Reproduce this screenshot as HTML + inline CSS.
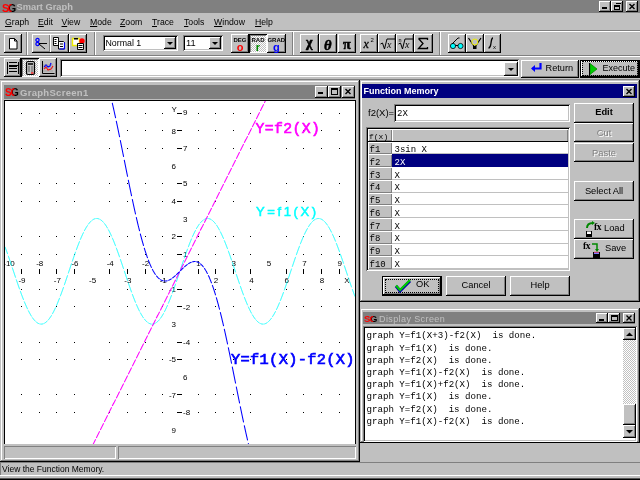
<!DOCTYPE html>
<html><head><meta charset="utf-8"><style>
html,body{margin:0;padding:0;}
body{width:640px;height:480px;position:relative;overflow:hidden;background:#c0c0c0;font-family:"Liberation Sans",sans-serif;}
div{position:absolute;box-sizing:border-box;}
.t{white-space:pre;line-height:1;}
.mn{font:9px "Liberation Sans",sans-serif;color:#000;}
.mono{font:9px "Liberation Mono",monospace;color:#000;}
.rb{background:#c0c0c0;box-shadow:inset -1px -1px #000,inset 1px 1px #fff,inset -2px -2px #808080;}
.rbd{background:#c0c0c0;box-shadow:inset -1px -1px #000,inset 1px 1px #000,inset -2px -2px #000, inset 2px 2px #fff,inset -3px -3px #808080;}
.pb{background-color:#fff;background-image:linear-gradient(45deg,#c0c0c0 25%,transparent 25%,transparent 75%,#c0c0c0 75%),linear-gradient(45deg,#c0c0c0 25%,transparent 25%,transparent 75%,#c0c0c0 75%);background-size:2px 2px;background-position:0 0,1px 1px;box-shadow:inset 1px 1px #000,inset -1px -1px #fff,inset 2px 2px #808080;}
.sk{box-shadow:inset 1px 1px #808080,inset -1px -1px #fff,inset 2px 2px #000,inset -2px -2px #c0c0c0;}
.sk2{box-shadow:inset 1px 1px #808080,inset -1px -1px #fff;}
.win{background:#c0c0c0;box-shadow:inset -1px -1px #000,inset 1px 1px #c0c0c0,inset -2px -2px #808080,inset 2px 2px #fff;}
svg{overflow:visible}
</style></head><body>
<div id="root" style="left:0;top:0;width:640px;height:480px;background:#c0c0c0;will-change:transform;overflow:hidden">
<div class="" style="left:0px;top:0px;width:640px;height:13px;background:#808080"></div>
<div class="t " style="left:2px;top:1.5px;font:bold 10.5px 'Liberation Sans';color:#f00">S</div>
<div class="t " style="left:8px;top:1.5px;font:bold 10.5px 'Liberation Sans';color:#000">G</div>
<div class="t " style="left:7.5px;top:1.5px;font:bold 10.5px 'Liberation Sans';color:#f00;clip-path:inset(0 50% 0 0)">G</div>
<div class="t " style="left:16.5px;top:1.5px;font:bold 9.3px 'Liberation Sans';color:#c0c0c0">Smart Graph</div>
<div class="rb" style="left:599px;top:1px;width:12px;height:11px;"></div>
<div class="rb" style="left:611px;top:1px;width:12px;height:11px;"></div>
<div class="rb" style="left:626px;top:1px;width:12px;height:11px;"></div>
<div class="" style="left:602px;top:7px;width:5px;height:2px;background:#000"></div>
<div class="" style="left:614px;top:5px;width:6px;height:5px;border:1px solid #000;border-top-width:2px"></div>
<div class="" style="left:616px;top:3px;width:5px;height:1px;background:#000"></div>
<svg style="position:absolute;left:626px;top:1px" width="12" height="11" viewBox="0 0 12 11"><path d="M3.5 3L8.5 8M8.5 3L3.5 8" stroke="#000" stroke-width="1.4"/></svg>
<div class="t mn" style="left:5px;top:16.8px;font-size:8.7px"><u>G</u>raph</div>
<div class="t mn" style="left:38px;top:16.8px;font-size:8.7px"><u>E</u>dit</div>
<div class="t mn" style="left:61.5px;top:16.8px;font-size:8.7px"><u>V</u>iew</div>
<div class="t mn" style="left:90px;top:16.8px;font-size:8.7px"><u>M</u>ode</div>
<div class="t mn" style="left:120px;top:16.8px;font-size:8.7px"><u>Z</u>oom</div>
<div class="t mn" style="left:152px;top:16.8px;font-size:8.7px"><u>T</u>race</div>
<div class="t mn" style="left:184px;top:16.8px;font-size:8.7px"><u>T</u>ools</div>
<div class="t mn" style="left:214px;top:16.8px;font-size:8.7px"><u>W</u>indow</div>
<div class="t mn" style="left:255px;top:16.8px;font-size:8.7px"><u>H</u>elp</div>
<div class="" style="left:0px;top:30px;width:640px;height:1px;background:#808080"></div>
<div class="" style="left:0px;top:31px;width:640px;height:1px;background:#fff"></div>
<div class="" style="left:26px;top:32px;width:1px;height:23px;background:#808080"></div>
<div class="" style="left:27px;top:32px;width:1px;height:23px;background:#fff"></div>
<div class="" style="left:94px;top:32px;width:1px;height:23px;background:#808080"></div>
<div class="" style="left:95px;top:32px;width:1px;height:23px;background:#fff"></div>
<div class="" style="left:292px;top:32px;width:1px;height:23px;background:#808080"></div>
<div class="" style="left:293px;top:32px;width:1px;height:23px;background:#fff"></div>
<div class="" style="left:439px;top:32px;width:1px;height:23px;background:#808080"></div>
<div class="" style="left:440px;top:32px;width:1px;height:23px;background:#fff"></div>
<div class="" style="left:0px;top:55px;width:640px;height:1px;background:#808080"></div>
<div class="" style="left:0px;top:56px;width:640px;height:1px;background:#fff"></div>
<div class="rb" style="left:4px;top:34px;width:18px;height:19px;"></div>
<svg style="position:absolute;left:4px;top:34px" width="18" height="19" viewBox="0 0 18 19"><path d="M5.5 4.5h5l2.5 2.5v8h-7.5z" fill="#fff" stroke="#000"/><path d="M10.5 4.5v2.5h2.5" fill="none" stroke="#000"/></svg>
<div class="rb" style="left:32px;top:34px;width:18.6px;height:19px;"></div>
<svg style="position:absolute;left:32px;top:34px" width="18.6" height="19" viewBox="0 0 18.6 19"><circle cx="5.5" cy="6" r="1.6" fill="none" stroke="#00f" stroke-width="1.3"/><circle cx="5.5" cy="10" r="1.6" fill="none" stroke="#00f" stroke-width="1.3"/><path d="M7 9.5h8M7 10l6 5" stroke="#000" stroke-width="1"/></svg>
<div class="rb" style="left:50.4px;top:34px;width:18.6px;height:19px;"></div>
<svg style="position:absolute;left:50.4px;top:34px" width="18.6" height="19" viewBox="0 0 18.6 19"><path d="M3.5 3.5h5v8h-5z" fill="#fff" stroke="#000"/><path d="M4.5 5.5h2M4.5 7.5h2M4.5 9.5h2" stroke="#000"/><path d="M8.5 7.5h5l1 1v6.5h-6z" fill="#fff" stroke="#000"/><path d="M14.5 8.5v6.5M9.5 15h5" stroke="#00f" stroke-width="1.2"/><path d="M10 10h3M10 12.5h3" stroke="#000"/></svg>
<div class="rb" style="left:68.8px;top:34px;width:18.6px;height:19px;"></div>
<svg style="position:absolute;left:68.8px;top:34px" width="18.6" height="19" viewBox="0 0 18.6 19"><path d="M3.5 4.5h7v7h-7z" fill="#fff" stroke="#ee0" stroke-width="1.4"/><path d="M5 4h4v1.5H5z" fill="#000"/><circle cx="13" cy="7" r="2.7" fill="#f00"/><path d="M8.5 9.5h6v6h-6z" fill="#fff" stroke="#000"/><path d="M9.5 11.5h4M9.5 13.5h4" stroke="#000"/></svg>
<div class="sk" style="left:103px;top:35px;width:75px;height:16px;background:#fff"></div>
<div class="rb" style="left:164px;top:37px;width:12px;height:12px;"></div>
<svg style="position:absolute;left:164px;top:37px" width="12" height="12" viewBox="0 0 12 12"><path d="M3 5h6l-3 3z" fill="#000"/></svg>
<div class="t mn" style="left:105.5px;top:37.5px;font-size:8.8px">Normal 1</div>
<div class="sk" style="left:183px;top:35px;width:40px;height:16px;background:#fff"></div>
<div class="rb" style="left:209px;top:37px;width:12px;height:12px;"></div>
<svg style="position:absolute;left:209px;top:37px" width="12" height="12" viewBox="0 0 12 12"><path d="M3 5h6l-3 3z" fill="#000"/></svg>
<div class="t mn" style="left:186px;top:37.5px;font-size:9.3px">11</div>
<div class="rb" style="left:231px;top:34px;width:18px;height:19px;"></div>
<div class="t " style="left:231px;top:36.5px;width:18px;text-align:center;font:bold 6px 'Liberation Sans';color:#000">DEG</div>
<div class="t " style="left:231px;top:40.5px;width:18px;text-align:center;font:bold 11px 'Liberation Sans';color:#f00">o</div>
<div class="pb" style="left:249px;top:34px;width:18px;height:19px;"></div>
<div class="t " style="left:249px;top:36.5px;width:18px;text-align:center;font:bold 6px 'Liberation Sans';color:#000">RAD</div>
<div class="t " style="left:249px;top:40.5px;width:18px;text-align:center;font:bold 11px 'Liberation Sans';color:#080">r</div>
<div class="rb" style="left:267px;top:34px;width:18.6px;height:19px;"></div>
<div class="t " style="left:267px;top:36.5px;width:18.6px;text-align:center;font:bold 6px 'Liberation Sans';color:#000">GRAD</div>
<div class="t " style="left:267px;top:40.5px;width:18.6px;text-align:center;font:bold 11px 'Liberation Sans';color:#00f">g</div>
<div class="rb" style="left:300px;top:34px;width:18.5px;height:19px;"></div>
<div class="t " style="left:300px;top:36px;width:18.5px;text-align:center;font:bold 14px 'Liberation Serif';color:#000;-webkit-text-stroke:0.6px #000;margin-top:-1.5px">χ</div>
<div class="rb" style="left:318.5px;top:34px;width:18.5px;height:19px;"></div>
<div class="t " style="left:318.5px;top:36px;width:18.5px;text-align:center;font:bold italic 14.5px 'Liberation Serif';color:#000;-webkit-text-stroke:0.5px #000;margin-top:0.5px">θ</div>
<div class="rb" style="left:337.5px;top:34px;width:18.6px;height:19px;"></div>
<div class="t " style="left:337.5px;top:36px;width:18.6px;text-align:center;font:bold 14px 'Liberation Serif';color:#000;-webkit-text-stroke:0.5px #000;margin-top:0.5px">π</div>
<div class="rb" style="left:359.5px;top:34px;width:18.3px;height:19px;"></div>
<svg style="position:absolute;left:359.5px;top:34px" width="18.3" height="19" viewBox="0 0 18.3 19"><text x="3.5" y="14" font-family="Liberation Serif" font-style="italic" font-size="12" stroke="#000" stroke-width="0.3">x</text><text x="10.5" y="8" font-family="Liberation Sans" font-size="6">2</text></svg>
<div class="rb" style="left:377.8px;top:34px;width:18.3px;height:19px;"></div>
<svg style="position:absolute;left:377.8px;top:34px" width="18.3" height="19" viewBox="0 0 18.3 19"><path d="M2.5 10l2 -1 2 6 2.5 -10h8" fill="none" stroke="#000" stroke-width="1"/><text x="9" y="14.5" font-family="Liberation Serif" font-style="italic" font-size="10">x</text></svg>
<div class="rb" style="left:396px;top:34px;width:18.3px;height:19px;"></div>
<svg style="position:absolute;left:396px;top:34px" width="18.3" height="19" viewBox="0 0 18.3 19"><text x="2.5" y="8" font-family="Liberation Sans" font-size="5.5">n</text><path d="M2.5 10l2 -1 2 6 2.5 -10h8" fill="none" stroke="#000" stroke-width="1"/><text x="9" y="14.5" font-family="Liberation Serif" font-style="italic" font-size="10">x</text></svg>
<div class="rb" style="left:414.3px;top:34px;width:18.3px;height:19px;"></div>
<svg style="position:absolute;left:414.3px;top:34px" width="18.3" height="19" viewBox="0 0 18.3 19"><path d="M4.5 4.5h9v1.5M4.5 4.5l4.5 5l-4.5 5h9v-1.5" fill="none" stroke="#000" stroke-width="1.3"/></svg>
<div class="rb" style="left:448px;top:34px;width:18px;height:19px;"></div>
<svg style="position:absolute;left:448px;top:34px" width="18" height="19" viewBox="0 0 18 19"><circle cx="5" cy="12" r="2.6" fill="#0ff" stroke="#000" stroke-width="0.8"/><circle cx="12.5" cy="12" r="2.6" fill="#0ff" stroke="#000" stroke-width="0.8"/><path d="M7.5 11.5h2.5M4 10l6 -6h1.5" fill="none" stroke="#000" stroke-width="1"/></svg>
<div class="rb" style="left:466px;top:34px;width:18px;height:19px;"></div>
<svg style="position:absolute;left:466px;top:34px" width="18" height="19" viewBox="0 0 18 19"><path d="M2.5 4l6 9M15 4l-6 9" stroke="#000" stroke-width="1.2"/><circle cx="8.8" cy="8" r="3" fill="#c0c0c0" stroke="#ee0" stroke-width="1"/><path d="M7 12h3.5v3h-3.5z" fill="#000"/></svg>
<div class="rb" style="left:484px;top:34px;width:17px;height:19px;"></div>
<svg style="position:absolute;left:484px;top:34px" width="17" height="19" viewBox="0 0 17 19"><path d="M9 4c-1.5 0 -1.5 2 -2 5s-0.5 5 -2.5 5" fill="none" stroke="#000" stroke-width="1.3"/><text x="9" y="14.5" font-family="Liberation Sans" font-size="6">x</text></svg>
<div class="rb" style="left:4px;top:58px;width:17px;height:19px;"></div>
<svg style="position:absolute;left:4px;top:58px" width="17" height="19" viewBox="0 0 17 19"><path d="M3.5 4v12M14.5 4v12" stroke="#000" stroke-width="1"/><path d="M5 4.5h8M5 7.5h9M5 10.5h8M5 13.5h8" stroke="#000" stroke-width="1"/><path d="M5 8.5h8" stroke="#000" stroke-width="1"/></svg>
<div class="pb" style="left:21px;top:58px;width:18px;height:19px;"></div>
<svg style="position:absolute;left:21px;top:58px" width="18" height="19" viewBox="0 0 18 19"><rect x="5.5" y="3.5" width="8" height="13" rx="1.5" fill="#c0c0c0" stroke="#000" stroke-width="1.2"/><path d="M7 6h5" stroke="#000" stroke-width="1.5"/><path d="M7.5 9h1M10.5 9h1M7.5 11h1M10.5 11h1M7.5 13h1M10.5 13h1" stroke="#000"/><path d="M10 15h2.5" stroke="#f00" stroke-width="1.2"/></svg>
<div class="rb" style="left:39px;top:58px;width:18px;height:19px;"></div>
<svg style="position:absolute;left:39px;top:58px" width="18" height="19" viewBox="0 0 18 19"><path d="M3.5 3v12.5h12" fill="none" stroke="#000" stroke-width="1"/><path d="M5 9l2 -2 2 2 2 -1 1 -3" fill="none" stroke="#00f" stroke-width="1.3"/><path d="M5 11l2 -2 2 3 3 -1 2 -3" fill="none" stroke="#f00" stroke-width="1.1"/><path d="M4 7h10M4 10h10M4 13h10" stroke="#808080" stroke-width="0.5"/></svg>
<div class="sk" style="left:60px;top:59px;width:459px;height:18px;background:#fff"></div>
<div class="rb" style="left:504px;top:62px;width:14px;height:14px;"></div>
<svg style="position:absolute;left:504px;top:62px" width="14" height="14" viewBox="0 0 14 14"><path d="M4 6h6l-3 3z" fill="#000"/></svg>
<div class="rb" style="left:521px;top:59.5px;width:58px;height:18px;"></div>
<svg style="position:absolute;left:529px;top:59.5px" width="16" height="14" viewBox="0 0 16 14"><path d="M11.5 3v5.5h-8" fill="none" stroke="#00f" stroke-width="2.2"/><path d="M2 8.5l4 -3.5v7z" fill="#00f"/></svg>
<div class="t mn" style="left:545.5px;top:63px;font-size:9.2px">Return</div>
<div class="rbd" style="left:580px;top:59.5px;width:60px;height:18px;"></div>
<div class="" style="left:582px;top:60.5px;width:56px;height:15px;border:1px dotted #000"></div>
<svg style="position:absolute;left:586px;top:61px" width="14" height="15" viewBox="0 0 14 15"><path d="M4 2.5l7 5.5-7 5.5z" fill="#0c0" stroke="#080" stroke-width="0.8"/><path d="M3.5 2v12" stroke="#000" stroke-width="1"/></svg>
<div class="t mn" style="left:602.5px;top:63px;font-size:9px">Execute</div>
<div class="" style="left:0px;top:78.5px;width:640px;height:1px;background:#808080"></div>
<div class="win" style="left:0px;top:80px;width:360px;height:382px;"></div>
<div class="" style="left:4px;top:85px;width:351px;height:14px;background:#808080"></div>
<div class="t " style="left:5px;top:87px;font:bold 10px 'Liberation Sans';color:#f00">S</div>
<div class="t " style="left:11px;top:87px;font:bold 10px 'Liberation Sans';color:#000">G</div>
<div class="t " style="left:10.5px;top:87px;font:bold 10px 'Liberation Sans';color:#f00;clip-path:inset(0 50% 0 0)">G</div>
<div class="t " style="left:20px;top:87px;font:bold 9.5px 'Liberation Sans';color:#c0c0c0;letter-spacing:0.3px">GraphScreen1</div>
<div class="rb" style="left:315px;top:86px;width:12.5px;height:11.5px;"></div>
<div class="rb" style="left:328px;top:86px;width:12.5px;height:11.5px;"></div>
<div class="rb" style="left:342px;top:86px;width:12.5px;height:11.5px;"></div>
<div class="" style="left:318px;top:92px;width:5px;height:2px;background:#000"></div>
<div class="" style="left:331px;top:88px;width:7px;height:7px;border:1px solid #000;border-top-width:2px"></div>
<svg style="position:absolute;left:342px;top:86px" width="12" height="11" viewBox="0 0 12 11"><path d="M3.5 3L8.5 8M8.5 3L3.5 8" stroke="#000" stroke-width="1.4"/></svg>
<div class="" style="left:4px;top:100px;width:352px;height:344px;background:#fff;border-left:1px solid #000;border-top:1px solid #000;border-right:1px solid #000"></div>
<svg width="350" height="343" viewBox="5 101 350 343" style="position:absolute;left:5px;top:101px;overflow:hidden"><path d="M21 113h1v1h-1zM21 130h1v1h-1zM21 148h1v1h-1zM21 183h1v1h-1zM21 201h1v1h-1zM21 236h1v1h-1zM21 254h1v1h-1zM21 289h1v1h-1zM21 306h1v1h-1zM21 342h1v1h-1zM21 359h1v1h-1zM21 394h1v1h-1zM21 412h1v1h-1zM39 113h1v1h-1zM39 130h1v1h-1zM39 148h1v1h-1zM39 183h1v1h-1zM39 201h1v1h-1zM39 236h1v1h-1zM39 254h1v1h-1zM39 289h1v1h-1zM39 306h1v1h-1zM39 342h1v1h-1zM39 359h1v1h-1zM39 394h1v1h-1zM39 412h1v1h-1zM56 113h1v1h-1zM56 130h1v1h-1zM56 148h1v1h-1zM56 183h1v1h-1zM56 201h1v1h-1zM56 236h1v1h-1zM56 254h1v1h-1zM56 289h1v1h-1zM56 306h1v1h-1zM56 342h1v1h-1zM56 359h1v1h-1zM56 394h1v1h-1zM56 412h1v1h-1zM74 113h1v1h-1zM74 130h1v1h-1zM74 148h1v1h-1zM74 183h1v1h-1zM74 201h1v1h-1zM74 236h1v1h-1zM74 254h1v1h-1zM74 289h1v1h-1zM74 306h1v1h-1zM74 342h1v1h-1zM74 359h1v1h-1zM74 394h1v1h-1zM74 412h1v1h-1zM109 113h1v1h-1zM109 130h1v1h-1zM109 148h1v1h-1zM109 183h1v1h-1zM109 201h1v1h-1zM109 236h1v1h-1zM109 254h1v1h-1zM109 289h1v1h-1zM109 306h1v1h-1zM109 342h1v1h-1zM109 359h1v1h-1zM109 394h1v1h-1zM109 412h1v1h-1zM127 113h1v1h-1zM127 130h1v1h-1zM127 148h1v1h-1zM127 183h1v1h-1zM127 201h1v1h-1zM127 236h1v1h-1zM127 254h1v1h-1zM127 289h1v1h-1zM127 306h1v1h-1zM127 342h1v1h-1zM127 359h1v1h-1zM127 394h1v1h-1zM127 412h1v1h-1zM145 113h1v1h-1zM145 130h1v1h-1zM145 148h1v1h-1zM145 183h1v1h-1zM145 201h1v1h-1zM145 236h1v1h-1zM145 254h1v1h-1zM145 289h1v1h-1zM145 306h1v1h-1zM145 342h1v1h-1zM145 359h1v1h-1zM145 394h1v1h-1zM145 412h1v1h-1zM162 113h1v1h-1zM162 130h1v1h-1zM162 148h1v1h-1zM162 183h1v1h-1zM162 201h1v1h-1zM162 236h1v1h-1zM162 254h1v1h-1zM162 289h1v1h-1zM162 306h1v1h-1zM162 342h1v1h-1zM162 359h1v1h-1zM162 394h1v1h-1zM162 412h1v1h-1zM198 113h1v1h-1zM198 130h1v1h-1zM198 148h1v1h-1zM198 183h1v1h-1zM198 201h1v1h-1zM198 236h1v1h-1zM198 254h1v1h-1zM198 289h1v1h-1zM198 306h1v1h-1zM198 342h1v1h-1zM198 359h1v1h-1zM198 394h1v1h-1zM198 412h1v1h-1zM215 113h1v1h-1zM215 130h1v1h-1zM215 148h1v1h-1zM215 183h1v1h-1zM215 201h1v1h-1zM215 236h1v1h-1zM215 254h1v1h-1zM215 289h1v1h-1zM215 306h1v1h-1zM215 342h1v1h-1zM215 359h1v1h-1zM215 394h1v1h-1zM215 412h1v1h-1zM233 113h1v1h-1zM233 130h1v1h-1zM233 148h1v1h-1zM233 183h1v1h-1zM233 201h1v1h-1zM233 236h1v1h-1zM233 254h1v1h-1zM233 289h1v1h-1zM233 306h1v1h-1zM233 342h1v1h-1zM233 359h1v1h-1zM233 394h1v1h-1zM233 412h1v1h-1zM250 113h1v1h-1zM250 130h1v1h-1zM250 148h1v1h-1zM250 183h1v1h-1zM250 201h1v1h-1zM250 236h1v1h-1zM250 254h1v1h-1zM250 289h1v1h-1zM250 306h1v1h-1zM250 342h1v1h-1zM250 359h1v1h-1zM250 394h1v1h-1zM250 412h1v1h-1zM286 113h1v1h-1zM286 130h1v1h-1zM286 148h1v1h-1zM286 183h1v1h-1zM286 201h1v1h-1zM286 236h1v1h-1zM286 254h1v1h-1zM286 289h1v1h-1zM286 306h1v1h-1zM286 342h1v1h-1zM286 359h1v1h-1zM286 394h1v1h-1zM286 412h1v1h-1zM303 113h1v1h-1zM303 130h1v1h-1zM303 148h1v1h-1zM303 183h1v1h-1zM303 201h1v1h-1zM303 236h1v1h-1zM303 254h1v1h-1zM303 289h1v1h-1zM303 306h1v1h-1zM303 342h1v1h-1zM303 359h1v1h-1zM303 394h1v1h-1zM303 412h1v1h-1zM321 113h1v1h-1zM321 130h1v1h-1zM321 148h1v1h-1zM321 183h1v1h-1zM321 201h1v1h-1zM321 236h1v1h-1zM321 254h1v1h-1zM321 289h1v1h-1zM321 306h1v1h-1zM321 342h1v1h-1zM321 359h1v1h-1zM321 394h1v1h-1zM321 412h1v1h-1zM339 113h1v1h-1zM339 130h1v1h-1zM339 148h1v1h-1zM339 183h1v1h-1zM339 201h1v1h-1zM339 236h1v1h-1zM339 254h1v1h-1zM339 289h1v1h-1zM339 306h1v1h-1zM339 342h1v1h-1zM339 359h1v1h-1zM339 394h1v1h-1zM339 412h1v1h-1z" fill="#000"/><path d="M21 269h1v5h-1zM39 269h1v5h-1zM56 269h1v5h-1zM74 269h1v5h-1zM109 269h1v5h-1zM127 269h1v5h-1zM145 269h1v5h-1zM162 269h1v5h-1zM198 269h1v5h-1zM215 269h1v5h-1zM233 269h1v5h-1zM250 269h1v5h-1zM286 269h1v5h-1zM303 269h1v5h-1zM321 269h1v5h-1zM339 269h1v5h-1zM177 412h5v1h-5zM177 394h5v1h-5zM177 359h5v1h-5zM177 342h5v1h-5zM177 306h5v1h-5zM177 289h5v1h-5zM177 254h5v1h-5zM177 236h5v1h-5zM177 201h5v1h-5zM177 183h5v1h-5zM177 148h5v1h-5zM177 130h5v1h-5zM177 113h5v1h-5z" fill="#000"/><g font-family="Liberation Sans" font-size="8" fill="#000"><text x="9.0" y="266.0" text-anchor="middle">-10</text><text x="22.0" y="283.0" text-anchor="middle">-9</text><text x="39.7" y="266.0" text-anchor="middle">-8</text><text x="57.3" y="283.0" text-anchor="middle">-7</text><text x="75.0" y="266.0" text-anchor="middle">-6</text><text x="92.6" y="283.0" text-anchor="middle">-5</text><text x="110.2" y="266.0" text-anchor="middle">-4</text><text x="127.9" y="283.0" text-anchor="middle">-3</text><text x="145.6" y="266.0" text-anchor="middle">-2</text><text x="163.2" y="283.0" text-anchor="middle">-1</text><text x="198.5" y="266.0" text-anchor="middle">1</text><text x="216.1" y="283.0" text-anchor="middle">2</text><text x="233.8" y="266.0" text-anchor="middle">3</text><text x="251.4" y="283.0" text-anchor="middle">4</text><text x="269.1" y="266.0" text-anchor="middle">5</text><text x="286.8" y="283.0" text-anchor="middle">6</text><text x="304.4" y="266.0" text-anchor="middle">7</text><text x="322.0" y="283.0" text-anchor="middle">8</text><text x="339.7" y="266.0" text-anchor="middle">9</text><text x="347.0" y="283.0" text-anchor="middle">X</text><text x="176.0" y="432.7" text-anchor="end">9</text><text x="183.0" y="415.1" text-anchor="start">-8</text><text x="176.0" y="397.5" text-anchor="end">-7</text><text x="183.0" y="379.9" text-anchor="start">6</text><text x="176.0" y="362.3" text-anchor="end">-5</text><text x="183.0" y="344.7" text-anchor="start">-4</text><text x="176.0" y="327.1" text-anchor="end">3</text><text x="183.0" y="309.5" text-anchor="start">-2</text><text x="176.0" y="291.9" text-anchor="end">-1</text><text x="183.0" y="256.7" text-anchor="start">1</text><text x="176.0" y="239.1" text-anchor="end">2</text><text x="183.0" y="221.5" text-anchor="start">3</text><text x="176.0" y="203.9" text-anchor="end">4</text><text x="183.0" y="186.3" text-anchor="start">5</text><text x="176.0" y="168.7" text-anchor="end">6</text><text x="183.0" y="151.1" text-anchor="start">7</text><text x="176.0" y="133.5" text-anchor="end">8</text><text x="171.5" y="112.0" text-anchor="start">Y</text><text x="183.0" y="115.0" text-anchor="start">9</text></g><path d="M5.00,246.84 5.12,247.17 5.25,247.50 5.38,247.84 5.50,248.17 5.62,248.51 5.75,248.85 5.88,249.19 6.00,249.53 6.12,249.87 6.25,250.21 6.38,250.55 6.50,250.90 6.62,251.24 6.75,251.59 6.88,251.94 7.00,252.28 7.12,252.63 7.25,252.98 7.38,253.34 7.50,253.69 7.62,254.04M8.25,255.82 8.38,256.18 8.50,256.53 8.62,256.89 8.75,257.25 8.88,257.61 9.00,257.98 9.12,258.34 9.25,258.70 9.38,259.06 9.50,259.43 9.62,259.79 9.75,260.16 9.88,260.52 10.00,260.89 10.12,261.26 10.25,261.62 10.38,261.99 10.50,262.36 10.62,262.73 10.75,263.10 10.88,263.47 11.00,263.84 11.12,264.21 11.25,264.58 11.38,264.95 11.50,265.32 11.62,265.69M12.25,267.56 12.38,267.93 12.50,268.30 12.62,268.68 12.75,269.05 12.88,269.42 13.00,269.80 13.12,270.17 13.25,270.54 13.38,270.92 13.50,271.29 13.62,271.67 13.75,272.04 13.88,272.41 14.00,272.79 14.12,273.16 14.25,273.53 14.38,273.91 14.50,274.28 14.62,274.66 14.75,275.03 14.88,275.40 15.00,275.77 15.12,276.15 15.25,276.52 15.38,276.89 15.50,277.26 15.62,277.63M16.25,279.49 16.38,279.85 16.50,280.22 16.62,280.59 16.75,280.96 16.88,281.33 17.00,281.69 17.12,282.06 17.25,282.43 17.38,282.79 17.50,283.16 17.62,283.52 17.75,283.88 17.88,284.25 18.00,284.61 18.12,284.97 18.25,285.33 18.38,285.69 18.50,286.05 18.62,286.41 18.75,286.77 18.88,287.12 19.00,287.48 19.12,287.84 19.25,288.19 19.38,288.54 19.50,288.90 19.62,289.25M20.25,291.00 20.38,291.34 20.50,291.69 20.62,292.03 20.75,292.38 20.88,292.72 21.00,293.06 21.12,293.40 21.25,293.74 21.38,294.08 21.50,294.41 21.62,294.75 21.75,295.08 21.88,295.42 22.00,295.75 22.12,296.08 22.25,296.41 22.38,296.74 22.50,297.06 22.62,297.39 22.75,297.72 22.88,298.04 23.00,298.36 23.12,298.68 23.25,299.00 23.38,299.32 23.50,299.63 23.62,299.95M24.25,301.50 24.38,301.81 24.50,302.11 24.62,302.41 24.75,302.72 24.88,303.01 25.00,303.31 25.12,303.61 25.25,303.90 25.38,304.20 25.50,304.49 25.62,304.78 25.75,305.07 25.88,305.35 26.00,305.64 26.12,305.92 26.25,306.20 26.38,306.48 26.50,306.76 26.62,307.04 26.75,307.31 26.88,307.58 27.00,307.86 27.12,308.12 27.25,308.39 27.38,308.66 27.50,308.92 27.62,309.18M28.25,310.46 28.38,310.71 28.50,310.96 28.62,311.20 28.75,311.45 28.88,311.69 29.00,311.93 29.12,312.17 29.25,312.40 29.38,312.64 29.50,312.87 29.62,313.10 29.75,313.32 29.88,313.55 30.00,313.77 30.12,313.99 30.25,314.21 30.38,314.43 30.50,314.64 30.62,314.86 30.75,315.07 30.88,315.28 31.00,315.48 31.12,315.68 31.25,315.89 31.38,316.09 31.50,316.28 31.62,316.48M32.25,317.42 32.38,317.60 32.50,317.78 32.62,317.95 32.75,318.13 32.88,318.30 33.00,318.47 33.12,318.63 33.25,318.80 33.38,318.96 33.50,319.12 33.62,319.28 33.75,319.43 33.88,319.58 34.00,319.74 34.12,319.88 34.25,320.03 34.38,320.17 34.50,320.31 34.62,320.45 34.75,320.58 34.88,320.72 35.00,320.85 35.12,320.98 35.25,321.10 35.38,321.22 35.50,321.34 35.62,321.46M36.25,322.01 36.38,322.12 36.50,322.22 36.62,322.32 36.75,322.41 36.88,322.50 37.00,322.59 37.12,322.68 37.25,322.77 37.38,322.85 37.50,322.93 37.62,323.00 37.75,323.08 37.88,323.15 38.00,323.22 38.12,323.29 38.25,323.35 38.38,323.41 38.50,323.47 38.62,323.53 38.75,323.58 38.88,323.63 39.00,323.68 39.12,323.73 39.25,323.77 39.38,323.81 39.50,323.85 39.62,323.88M40.25,324.02 40.38,324.04 40.50,324.06 40.62,324.07 40.75,324.08 40.88,324.09 41.00,324.10 41.12,324.10 41.25,324.10 41.38,324.10 41.50,324.09 41.62,324.09 41.75,324.08 41.88,324.06 42.00,324.05 42.12,324.03 42.25,324.01 42.38,323.99 42.50,323.96 42.62,323.93 42.75,323.90 42.88,323.87 43.00,323.83 43.12,323.80 43.25,323.75 43.38,323.71 43.50,323.66 43.62,323.61M44.25,323.33 44.38,323.26 44.50,323.19 44.62,323.12 44.75,323.05 44.88,322.98 45.00,322.90 45.12,322.82 45.25,322.73 45.38,322.65 45.50,322.56 45.62,322.47 45.75,322.38 45.88,322.28 46.00,322.18 46.12,322.08 46.25,321.98 46.38,321.87 46.50,321.76 46.62,321.65 46.75,321.54 46.88,321.42 47.00,321.30 47.12,321.18 47.25,321.06 47.38,320.93 47.50,320.80 47.62,320.67M48.25,319.98 48.38,319.83 48.50,319.68 48.62,319.53 48.75,319.38 48.88,319.22 49.00,319.06 49.12,318.90 49.25,318.74 49.38,318.57 49.50,318.41 49.62,318.24 49.75,318.06 49.88,317.89 50.00,317.71 50.12,317.53 50.25,317.35 50.38,317.17 50.50,316.98 50.62,316.79 50.75,316.60 50.88,316.41 51.00,316.21 51.12,316.01 51.25,315.81 51.38,315.61 51.50,315.41 51.62,315.20M52.25,314.13 52.38,313.91 52.50,313.69 52.62,313.47 52.75,313.24 52.88,313.01 53.00,312.78 53.12,312.55 53.25,312.32 53.38,312.08 53.50,311.84 53.62,311.60 53.75,311.36 53.88,311.11 54.00,310.87 54.12,310.62 54.25,310.37 54.38,310.12 54.50,309.86 54.62,309.60 54.75,309.35 54.88,309.09 55.00,308.82 55.12,308.56 55.25,308.29 55.38,308.03 55.50,307.76 55.62,307.49M56.25,306.10 56.38,305.82 56.50,305.54 56.62,305.25 56.75,304.96 56.88,304.67 57.00,304.38 57.12,304.09 57.25,303.80 57.38,303.50 57.50,303.20 57.62,302.91 57.75,302.61 57.88,302.30 58.00,302.00 58.12,301.70 58.25,301.39 58.38,301.08 58.50,300.77 58.62,300.46 58.75,300.15 58.88,299.83 59.00,299.52 59.12,299.20 59.25,298.88 59.38,298.56 59.50,298.24 59.62,297.92M60.25,296.29 60.38,295.96 60.50,295.63 60.62,295.30 60.75,294.96 60.88,294.63 61.00,294.29 61.12,293.95 61.25,293.62 61.38,293.28 61.50,292.94 61.62,292.59 61.75,292.25 61.88,291.91 62.00,291.56 62.12,291.22 62.25,290.87 62.38,290.52 62.50,290.17 62.62,289.82 62.75,289.47 62.88,289.12 63.00,288.77 63.12,288.42 63.25,288.06 63.38,287.71 63.50,287.35 63.62,286.99M64.25,285.20 64.38,284.84 64.50,284.48 64.62,284.11 64.75,283.75 64.88,283.39 65.00,283.02 65.12,282.66 65.25,282.29 65.38,281.93 65.50,281.56 65.62,281.19 65.75,280.83 65.88,280.46 66.00,280.09 66.12,279.72 66.25,279.35 66.38,278.98 66.50,278.61 66.62,278.24 66.75,277.87 66.88,277.50 67.00,277.13 67.12,276.76 67.25,276.38 67.38,276.01 67.50,275.64 67.62,275.27M68.25,273.40 68.38,273.03 68.50,272.65 68.62,272.28 68.75,271.90 68.88,271.53 69.00,271.16 69.12,270.78 69.25,270.41 69.38,270.03 69.50,269.66 69.62,269.29 69.75,268.91 69.88,268.54 70.00,268.17 70.12,267.79 70.25,267.42 70.38,267.05 70.50,266.67 70.62,266.30 70.75,265.93 70.88,265.56 71.00,265.19 71.12,264.82 71.25,264.44 71.38,264.07 71.50,263.70 71.62,263.33M72.25,261.49 72.38,261.12 72.50,260.76 72.62,260.39 72.75,260.03 72.88,259.66 73.00,259.30 73.12,258.93 73.25,258.57 73.38,258.21 73.50,257.84 73.62,257.48 73.75,257.12 73.88,256.76 74.00,256.40 74.12,256.04 74.25,255.69 74.38,255.33 74.50,254.97 74.62,254.62 74.75,254.26 74.88,253.91 75.00,253.56 75.12,253.21 75.25,252.86 75.38,252.51 75.50,252.16 75.62,251.81M76.25,250.08 76.38,249.74 76.50,249.40 76.62,249.06 76.75,248.72 76.88,248.39 77.00,248.05 77.12,247.71 77.25,247.38 77.38,247.05 77.50,246.72 77.62,246.39 77.75,246.06 77.88,245.73 78.00,245.40 78.12,245.08 78.25,244.75 78.38,244.43 78.50,244.11 78.62,243.79 78.75,243.47 78.88,243.15 79.00,242.84 79.12,242.52 79.25,242.21 79.38,241.90 79.50,241.59 79.62,241.28M80.25,239.76 80.38,239.46 80.50,239.17 80.62,238.87 80.75,238.58 80.88,238.28 81.00,237.99 81.12,237.70 81.25,237.42 81.38,237.13 81.50,236.85 81.62,236.56 81.75,236.28 81.88,236.00 82.00,235.73 82.12,235.45 82.25,235.18 82.38,234.90 82.50,234.63 82.62,234.37 82.75,234.10 82.88,233.84 83.00,233.57 83.12,233.31 83.25,233.05 83.38,232.80 83.50,232.54 83.62,232.29M84.25,231.05 84.38,230.81 84.50,230.57 84.62,230.34 84.75,230.10 84.88,229.87 85.00,229.64 85.12,229.41 85.25,229.18 85.38,228.96 85.50,228.74 85.62,228.52 85.75,228.30 85.88,228.08 86.00,227.87 86.12,227.66 86.25,227.45 86.38,227.24 86.50,227.04 86.62,226.83 86.75,226.63 86.88,226.43 87.00,226.24 87.12,226.04 87.25,225.85 87.38,225.66 87.50,225.48 87.62,225.29M88.25,224.40 88.38,224.23 88.50,224.06 88.62,223.90 88.75,223.74 88.88,223.57 89.00,223.42 89.12,223.26 89.25,223.11 89.38,222.95 89.50,222.80 89.62,222.66 89.75,222.51 89.88,222.37 90.00,222.23 90.12,222.10 90.25,221.96 90.38,221.83 90.50,221.70 90.62,221.57 90.75,221.45 90.88,221.33 91.00,221.21 91.12,221.09 91.25,220.98 91.38,220.86 91.50,220.75 91.62,220.65M92.25,220.15 92.38,220.06 92.50,219.97 92.62,219.88 92.75,219.80 92.88,219.72 93.00,219.64 93.12,219.57 93.25,219.49 93.38,219.42 93.50,219.35 93.62,219.29 93.75,219.22 93.88,219.16 94.00,219.11 94.12,219.05 94.25,219.00 94.38,218.95 94.50,218.90 94.62,218.86 94.75,218.81 94.88,218.77 95.00,218.74 95.12,218.70 95.25,218.67 95.38,218.64 95.50,218.62 95.62,218.59M96.25,218.52 96.38,218.51 96.50,218.50 96.62,218.50 96.75,218.50 96.88,218.50 97.00,218.51 97.12,218.52 97.25,218.53 97.38,218.54 97.50,218.56 97.62,218.58 97.75,218.60 97.88,218.62 98.00,218.65 98.12,218.68 98.25,218.71 98.38,218.74 98.50,218.78 98.62,218.82 98.75,218.86 98.88,218.91 99.00,218.96 99.12,219.01 99.25,219.06 99.38,219.12 99.50,219.17 99.62,219.24M100.25,219.58 100.38,219.66 100.50,219.73 100.62,219.82 100.75,219.90 100.88,219.99 101.00,220.08 101.12,220.17 101.25,220.26 101.38,220.36 101.50,220.46 101.62,220.56 101.75,220.67 101.88,220.77 102.00,220.88 102.12,221.00 102.25,221.11 102.38,221.23 102.50,221.35 102.62,221.47 102.75,221.60 102.88,221.72 103.00,221.85 103.12,221.99 103.25,222.12 103.38,222.26 103.50,222.40 103.62,222.54M104.25,223.29 104.38,223.44 104.50,223.60 104.62,223.76 104.75,223.93 104.88,224.09 105.00,224.26 105.12,224.43 105.25,224.61 105.38,224.78 105.50,224.96 105.62,225.14 105.75,225.32 105.88,225.51 106.00,225.70 106.12,225.89 106.25,226.08 106.38,226.27 106.50,226.47 106.62,226.67 106.75,226.87 106.88,227.07 107.00,227.28 107.12,227.48 107.25,227.69 107.38,227.91 107.50,228.12 107.62,228.34M108.25,229.45 108.38,229.68 108.50,229.91 108.62,230.14 108.75,230.38 108.88,230.62 109.00,230.86 109.12,231.10 109.25,231.34 109.38,231.59 109.50,231.83 109.62,232.08 109.75,232.33 109.88,232.59 110.00,232.84 110.12,233.10 110.25,233.36 110.38,233.62 110.50,233.88 110.62,234.15 110.75,234.41 110.88,234.68 111.00,234.95 111.12,235.23 111.25,235.50 111.38,235.78 111.50,236.05 111.62,236.33M112.25,237.75 112.38,238.04 112.50,238.34 112.62,238.63 112.75,238.92 112.88,239.22 113.00,239.52 113.12,239.82 113.25,240.12 113.38,240.42 113.50,240.72 113.62,241.03 113.75,241.34 113.88,241.65 114.00,241.96 114.12,242.27 114.25,242.58 114.38,242.89 114.50,243.21 114.62,243.53 114.75,243.85 114.88,244.17 115.00,244.49 115.12,244.81 115.25,245.14 115.38,245.46 115.50,245.79 115.62,246.12M116.25,247.77 116.38,248.11 116.50,248.45 116.62,248.78 116.75,249.12 116.88,249.46 117.00,249.80 117.12,250.15 117.25,250.49 117.38,250.83 117.50,251.18 117.62,251.52 117.75,251.87 117.88,252.22 118.00,252.57 118.12,252.92 118.25,253.27 118.38,253.62 118.50,253.97 118.62,254.33 118.75,254.68 118.88,255.04 119.00,255.39 119.12,255.75 119.25,256.11 119.38,256.47 119.50,256.83 119.62,257.19M120.25,259.00 120.38,259.36 120.50,259.73 120.62,260.09 120.75,260.46 120.88,260.82 121.00,261.19 121.12,261.56 121.25,261.92 121.38,262.29 121.50,262.66 121.62,263.03 121.75,263.40 121.88,263.77 122.00,264.14 122.12,264.51 122.25,264.88 122.38,265.25 122.50,265.62 122.62,266.00 122.75,266.37 122.88,266.74 123.00,267.11 123.12,267.49 123.25,267.86 123.38,268.23 123.50,268.61 123.62,268.98M124.25,270.85 124.38,271.22 124.50,271.60 124.62,271.97 124.75,272.34 124.88,272.72 125.00,273.09 125.12,273.47 125.25,273.84 125.38,274.21 125.50,274.59 125.62,274.96 125.75,275.33 125.88,275.70 126.00,276.08 126.12,276.45 126.25,276.82 126.38,277.19 126.50,277.56 126.62,277.94 126.75,278.31 126.88,278.68 127.00,279.05 127.12,279.42 127.25,279.79 127.38,280.16 127.50,280.52 127.62,280.89M128.25,282.72 128.38,283.09 128.50,283.45 128.62,283.82 128.75,284.18 128.88,284.54 129.00,284.90 129.12,285.26 129.25,285.62 129.38,285.98 129.50,286.34 129.62,286.70 129.75,287.06 129.88,287.41 130.00,287.77 130.12,288.13 130.25,288.48 130.38,288.83 130.50,289.18 130.62,289.54 130.75,289.89 130.88,290.24 131.00,290.58 131.12,290.93 131.25,291.28 131.38,291.62 131.50,291.97 131.62,292.31M132.25,294.01 132.38,294.35 132.50,294.69 132.62,295.02 132.75,295.36 132.88,295.69 133.00,296.02 133.12,296.35 133.25,296.68 133.38,297.00 133.50,297.33 133.62,297.65 133.75,297.98 133.88,298.30 134.00,298.62 134.12,298.94 134.25,299.26 134.38,299.57 134.50,299.89 134.62,300.20 134.75,300.52 134.88,300.83 135.00,301.14 135.12,301.44 135.25,301.75 135.38,302.05 135.50,302.36 135.62,302.66M136.25,304.14 136.38,304.44 136.50,304.73 136.62,305.01 136.75,305.30 136.88,305.59 137.00,305.87 137.12,306.15 137.25,306.43 137.38,306.71 137.50,306.99 137.62,307.26 137.75,307.53 137.88,307.81 138.00,308.07 138.12,308.34 138.25,308.61 138.38,308.87 138.50,309.13 138.62,309.39 138.75,309.65 138.88,309.91 139.00,310.16 139.12,310.41 139.25,310.66 139.38,310.91 139.50,311.16 139.62,311.40M140.25,312.59 140.38,312.82 140.50,313.05 140.62,313.28 140.75,313.51 140.88,313.73 141.00,313.95 141.12,314.17 141.25,314.39 141.38,314.60 141.50,314.82 141.62,315.03 141.75,315.24 141.88,315.44 142.00,315.65 142.12,315.85 142.25,316.05 142.38,316.25 142.50,316.44 142.62,316.63 142.75,316.82 142.88,317.01 143.00,317.20 143.12,317.38 143.25,317.56 143.38,317.74 143.50,317.92 143.62,318.09M144.25,318.93 144.38,319.09 144.50,319.25 144.62,319.40 144.75,319.56 144.88,319.71 145.00,319.86 145.12,320.00 145.25,320.14 145.38,320.29 145.50,320.42 145.62,320.56 145.75,320.69 145.88,320.82 146.00,320.95 146.12,321.08 146.25,321.20 146.38,321.32 146.50,321.44 146.62,321.56 146.75,321.67 146.88,321.78 147.00,321.89 147.12,322.00 147.25,322.10 147.38,322.20 147.50,322.30 147.62,322.39M148.25,322.83 148.38,322.91 148.50,322.99 148.62,323.07 148.75,323.14 148.88,323.21 149.00,323.27 149.12,323.34 149.25,323.40 149.38,323.46 149.50,323.52 149.62,323.57 149.75,323.62 149.88,323.67 150.00,323.72 150.12,323.76 150.25,323.80 150.38,323.84 150.50,323.88 150.62,323.91 150.75,323.94 150.88,323.97 151.00,323.99 151.12,324.02 151.25,324.04 151.38,324.05 151.50,324.07 151.62,324.08M152.25,324.10 152.38,324.09 152.50,324.09 152.62,324.08 152.75,324.07 152.88,324.05 153.00,324.04 153.12,324.02 153.25,323.99 153.38,323.97 153.50,323.94 153.62,323.91 153.75,323.88 153.88,323.84 154.00,323.80 154.12,323.76 154.25,323.72 154.38,323.67 154.50,323.62 154.62,323.57 154.75,323.52 154.88,323.46 155.00,323.40 155.12,323.34 155.25,323.27 155.38,323.21 155.50,323.14 155.62,323.07M156.25,322.66 156.38,322.58 156.50,322.49 156.62,322.39 156.75,322.30 156.88,322.20 157.00,322.10 157.12,322.00 157.25,321.89 157.38,321.78 157.50,321.67 157.62,321.56 157.75,321.44 157.88,321.32 158.00,321.20 158.12,321.08 158.25,320.95 158.38,320.82 158.50,320.69 158.62,320.56 158.75,320.42 158.88,320.29 159.00,320.15 159.12,320.00 159.25,319.86 159.38,319.71 159.50,319.56 159.62,319.40M160.25,318.60 160.38,318.44 160.50,318.27 160.62,318.10 160.75,317.92 160.88,317.74 161.00,317.57 161.12,317.38 161.25,317.20 161.38,317.01 161.50,316.83 161.62,316.64 161.75,316.44 161.88,316.25 162.00,316.05 162.12,315.85 162.25,315.65 162.38,315.44 162.50,315.24 162.62,315.03 162.75,314.82 162.88,314.61 163.00,314.39 163.12,314.17 163.25,313.95 163.38,313.73 163.50,313.51 163.62,313.28M164.25,312.12 164.38,311.89 164.50,311.65 164.62,311.40 164.75,311.16 164.88,310.91 165.00,310.67 165.12,310.41 165.25,310.16 165.38,309.91 165.50,309.65 165.62,309.39 165.75,309.13 165.88,308.87 166.00,308.61 166.12,308.34 166.25,308.08 166.38,307.81 166.50,307.54 166.62,307.26 166.75,306.99 166.88,306.71 167.00,306.43 167.12,306.15 167.25,305.87 167.38,305.59 167.50,305.30 167.62,305.02M168.25,303.56 168.38,303.26 168.50,302.96 168.62,302.66 168.75,302.36 168.88,302.06 169.00,301.75 169.12,301.45 169.25,301.14 169.38,300.83 169.50,300.52 169.62,300.21 169.75,299.89 169.88,299.58 170.00,299.26 170.12,298.94 170.25,298.62 170.38,298.30 170.50,297.98 170.62,297.66 170.75,297.33 170.88,297.01 171.00,296.68 171.12,296.35 171.25,296.02 171.38,295.69 171.50,295.36 171.62,295.02M172.25,293.34 172.38,293.00 172.50,292.66 172.62,292.32 172.75,291.97 172.88,291.63 173.00,291.28 173.12,290.93 173.25,290.59 173.38,290.24 173.50,289.89 173.62,289.54 173.75,289.19 173.88,288.83 174.00,288.48 174.12,288.13 174.25,287.77 174.38,287.42 174.50,287.06 174.62,286.70 174.75,286.35 174.88,285.99 175.00,285.63 175.12,285.27 175.25,284.91 175.38,284.54 175.50,284.18 175.62,283.82M176.25,281.99 176.38,281.63 176.50,281.26 176.62,280.89 176.75,280.53 176.88,280.16 177.00,279.79 177.12,279.42 177.25,279.05 177.38,278.68 177.50,278.31 177.62,277.94 177.75,277.57 177.88,277.20 178.00,276.82 178.12,276.45 178.25,276.08 178.38,275.71 178.50,275.33 178.62,274.96 178.75,274.59 178.88,274.22 179.00,273.84 179.12,273.47 179.25,273.09 179.38,272.72 179.50,272.35 179.62,271.97M180.25,270.10 180.38,269.73 180.50,269.36 180.62,268.98 180.75,268.61 180.88,268.24 181.00,267.86 181.12,267.49 181.25,267.12 181.38,266.74 181.50,266.37 181.62,266.00 181.75,265.63 181.88,265.26 182.00,264.88 182.12,264.51 182.25,264.14 182.38,263.77 182.50,263.40 182.62,263.03 182.75,262.66 182.88,262.29 183.00,261.93 183.12,261.56 183.25,261.19 183.38,260.82 183.50,260.46 183.62,260.09M184.25,258.27 184.38,257.91 184.50,257.55 184.62,257.19 184.75,256.83 184.88,256.47 185.00,256.11 185.12,255.75 185.25,255.40 185.38,255.04 185.50,254.69 185.62,254.33 185.75,253.98 185.88,253.62 186.00,253.27 186.12,252.92 186.25,252.57 186.38,252.22 186.50,251.87 186.62,251.53 186.75,251.18 186.88,250.84 187.00,250.49 187.12,250.15 187.25,249.81 187.38,249.46 187.50,249.12 187.62,248.79M188.25,247.11 188.38,246.78 188.50,246.45 188.62,246.12 188.75,245.79 188.88,245.46 189.00,245.14 189.12,244.81 189.25,244.49 189.38,244.17 189.50,243.85 189.62,243.53 189.75,243.21 189.88,242.90 190.00,242.58 190.12,242.27 190.25,241.96 190.38,241.65 190.50,241.34 190.62,241.03 190.75,240.73 190.88,240.42 191.00,240.12 191.12,239.82 191.25,239.52 191.38,239.22 191.50,238.93 191.62,238.63M192.25,237.18 192.38,236.90 192.50,236.62 192.62,236.33 192.75,236.05 192.88,235.78 193.00,235.50 193.12,235.23 193.25,234.96 193.38,234.68 193.50,234.42 193.62,234.15 193.75,233.89 193.88,233.62 194.00,233.36 194.12,233.10 194.25,232.84 194.38,232.59 194.50,232.34 194.62,232.08 194.75,231.84 194.88,231.59 195.00,231.34 195.12,231.10 195.25,230.86 195.38,230.62 195.50,230.38 195.62,230.15M196.25,229.00 196.38,228.78 196.50,228.56 196.62,228.34 196.75,228.12 196.88,227.91 197.00,227.70 197.12,227.49 197.25,227.28 197.38,227.07 197.50,226.87 197.62,226.67 197.75,226.47 197.88,226.27 198.00,226.08 198.12,225.89 198.25,225.70 198.38,225.51 198.50,225.33 198.62,225.14 198.75,224.96 198.88,224.78 199.00,224.61 199.12,224.44 199.25,224.26 199.38,224.10 199.50,223.93 199.62,223.77M200.25,222.98 200.38,222.83 200.50,222.68 200.62,222.54 200.75,222.40 200.88,222.26 201.00,222.12 201.12,221.99 201.25,221.85 201.38,221.72 201.50,221.60 201.62,221.47 201.75,221.35 201.88,221.23 202.00,221.11 202.12,221.00 202.25,220.88 202.38,220.77 202.50,220.67 202.62,220.56 202.75,220.46 202.88,220.36 203.00,220.26 203.12,220.17 203.25,220.08 203.38,219.99 203.50,219.90 203.62,219.82M204.25,219.43 204.38,219.37 204.50,219.30 204.62,219.24 204.75,219.17 204.88,219.12 205.00,219.06 205.12,219.01 205.25,218.96 205.38,218.91 205.50,218.86 205.62,218.82 205.75,218.78 205.88,218.74 206.00,218.71 206.12,218.68 206.25,218.65 206.38,218.62 206.50,218.60 206.62,218.58 206.75,218.56 206.88,218.54 207.00,218.53 207.12,218.52 207.25,218.51 207.38,218.50 207.50,218.50 207.62,218.50M208.25,218.54 208.38,218.55 208.50,218.57 208.62,218.59 208.75,218.62 208.88,218.64 209.00,218.67 209.12,218.70 209.25,218.74 209.38,218.77 209.50,218.81 209.62,218.86 209.75,218.90 209.88,218.95 210.00,219.00 210.12,219.05 210.25,219.11 210.38,219.16 210.50,219.22 210.62,219.29 210.75,219.35 210.88,219.42 211.00,219.49 211.12,219.56 211.25,219.64 211.38,219.72 211.50,219.80 211.62,219.88M212.25,220.34 212.38,220.44 212.50,220.54 212.62,220.65 212.75,220.75 212.88,220.86 213.00,220.97 213.12,221.09 213.25,221.21 213.38,221.33 213.50,221.45 213.62,221.57 213.75,221.70 213.88,221.83 214.00,221.96 214.12,222.09 214.25,222.23 214.38,222.37 214.50,222.51 214.62,222.66 214.75,222.80 214.88,222.95 215.00,223.10 215.12,223.26 215.25,223.41 215.38,223.57 215.50,223.73 215.62,223.90M216.25,224.75 216.38,224.93 216.50,225.11 216.62,225.29 216.75,225.48 216.88,225.66 217.00,225.85 217.12,226.04 217.25,226.24 217.38,226.43 217.50,226.63 217.62,226.83 217.75,227.03 217.88,227.24 218.00,227.45 218.12,227.66 218.25,227.87 218.38,228.08 218.50,228.30 218.62,228.51 218.75,228.73 218.88,228.96 219.00,229.18 219.12,229.41 219.25,229.64 219.38,229.87 219.50,230.10 219.62,230.34M220.25,231.54 220.38,231.79 220.50,232.04 220.62,232.29 220.75,232.54 220.88,232.80 221.00,233.05 221.12,233.31 221.25,233.57 221.38,233.83 221.50,234.10 221.62,234.36 221.75,234.63 221.88,234.90 222.00,235.17 222.12,235.45 222.25,235.72 222.38,236.00 222.50,236.28 222.62,236.56 222.75,236.84 222.88,237.13 223.00,237.41 223.12,237.70 223.25,237.99 223.38,238.28 223.50,238.57 223.62,238.87M224.25,240.36 224.38,240.67 224.50,240.97 224.62,241.28 224.75,241.59 224.88,241.90 225.00,242.21 225.12,242.52 225.25,242.84 225.38,243.15 225.50,243.47 225.62,243.79 225.75,244.11 225.88,244.43 226.00,244.75 226.12,245.07 226.25,245.40 226.38,245.73 226.50,246.05 226.62,246.38 226.75,246.71 226.88,247.05 227.00,247.38 227.12,247.71 227.25,248.05 227.38,248.38 227.50,248.72 227.62,249.06M228.25,250.77 228.38,251.11 228.50,251.46 228.62,251.81 228.75,252.15 228.88,252.50 229.00,252.85 229.12,253.20 229.25,253.56 229.38,253.91 229.50,254.26 229.62,254.62 229.75,254.97 229.88,255.33 230.00,255.68 230.12,256.04 230.25,256.40 230.38,256.76 230.50,257.12 230.62,257.48 230.75,257.84 230.88,258.20 231.00,258.57 231.12,258.93 231.25,259.29 231.38,259.66 231.50,260.02 231.62,260.39M232.25,262.22 232.38,262.59 232.50,262.96 232.62,263.33 232.75,263.70 232.88,264.07 233.00,264.44 233.12,264.81 233.25,265.18 233.38,265.56 233.50,265.93 233.62,266.30 233.75,266.67 233.88,267.04 234.00,267.42 234.12,267.79 234.25,268.16 234.38,268.54 234.50,268.91 234.62,269.28 234.75,269.66 234.88,270.03 235.00,270.41 235.12,270.78 235.25,271.15 235.38,271.53 235.50,271.90 235.62,272.27M236.25,274.14 236.38,274.52 236.50,274.89 236.62,275.26 236.75,275.64 236.88,276.01 237.00,276.38 237.12,276.75 237.25,277.12 237.38,277.50 237.50,277.87 237.62,278.24 237.75,278.61 237.88,278.98 238.00,279.35 238.12,279.72 238.25,280.09 238.38,280.46 238.50,280.82 238.62,281.19 238.75,281.56 238.88,281.92 239.00,282.29 239.12,282.66 239.25,283.02 239.38,283.38 239.50,283.75 239.62,284.11M240.25,285.92 240.38,286.28 240.50,286.63 240.62,286.99 240.75,287.35 240.88,287.70 241.00,288.06 241.12,288.41 241.25,288.77 241.38,289.12 241.50,289.47 241.62,289.82 241.75,290.17 241.88,290.52 242.00,290.87 242.12,291.21 242.25,291.56 242.38,291.91 242.50,292.25 242.62,292.59 242.75,292.93 242.88,293.27 243.00,293.61 243.12,293.95 243.25,294.29 243.38,294.62 243.50,294.96 243.62,295.29M244.25,296.94 244.38,297.27 244.50,297.59 244.62,297.92 244.75,298.24 244.88,298.56 245.00,298.88 245.12,299.20 245.25,299.52 245.38,299.83 245.50,300.15 245.62,300.46 245.75,300.77 245.88,301.08 246.00,301.39 246.12,301.69 246.25,302.00 246.38,302.30 246.50,302.60 246.62,302.90 246.75,303.20 246.88,303.50 247.00,303.80 247.12,304.09 247.25,304.38 247.38,304.67 247.50,304.96 247.62,305.25M248.25,306.66 248.38,306.94 248.50,307.21 248.62,307.48 248.75,307.75 248.88,308.02 249.00,308.29 249.12,308.56 249.25,308.82 249.38,309.08 249.50,309.34 249.62,309.60 249.75,309.86 249.88,310.11 250.00,310.37 250.12,310.62 250.25,310.87 250.38,311.11 250.50,311.36 250.62,311.60 250.75,311.84 250.88,312.08 251.00,312.32 251.12,312.55 251.25,312.78 251.38,313.01 251.50,313.24 251.62,313.47M252.25,314.57 252.38,314.78 252.50,314.99 252.62,315.20 252.75,315.41 252.88,315.61 253.00,315.81 253.12,316.01 253.25,316.21 253.38,316.41 253.50,316.60 253.62,316.79 253.75,316.98 253.88,317.16 254.00,317.35 254.12,317.53 254.25,317.71 254.38,317.89 254.50,318.06 254.62,318.23 254.75,318.40 254.88,318.57 255.00,318.74 255.12,318.90 255.25,319.06 255.38,319.22 255.50,319.38 255.62,319.53M256.25,320.26 256.38,320.40 256.50,320.53 256.62,320.67 256.75,320.80 256.88,320.93 257.00,321.05 257.12,321.18 257.25,321.30 257.38,321.42 257.50,321.54 257.62,321.65 257.75,321.76 257.88,321.87 258.00,321.98 258.12,322.08 258.25,322.18 258.38,322.28 258.50,322.38 258.62,322.47 258.75,322.56 258.88,322.65 259.00,322.73 259.12,322.82 259.25,322.90 259.38,322.98 259.50,323.05 259.62,323.12M260.25,323.45 260.38,323.51 260.50,323.56 260.62,323.61 260.75,323.66 260.88,323.71 261.00,323.75 261.12,323.79 261.25,323.83 261.38,323.87 261.50,323.90 261.62,323.93 261.75,323.96 261.88,323.99 262.00,324.01 262.12,324.03 262.25,324.05 262.38,324.06 262.50,324.08 262.62,324.09 262.75,324.09 262.88,324.10 263.00,324.10 263.12,324.10 263.25,324.10 263.38,324.09 263.50,324.08 263.62,324.07M264.25,323.97 264.38,323.95 264.50,323.92 264.62,323.88 264.75,323.85 264.88,323.81 265.00,323.77 265.12,323.73 265.25,323.68 265.38,323.63 265.50,323.58 265.62,323.53 265.75,323.47 265.88,323.41 266.00,323.35 266.12,323.29 266.25,323.22 266.38,323.15 266.50,323.08 266.62,323.00 266.75,322.93 266.88,322.85 267.00,322.77 267.12,322.68 267.25,322.59 267.38,322.50 267.50,322.41 267.62,322.32M268.25,321.80 268.38,321.69 268.50,321.58 268.62,321.46 268.75,321.35 268.88,321.22 269.00,321.10 269.12,320.98 269.25,320.85 269.38,320.72 269.50,320.59 269.62,320.45 269.75,320.31 269.88,320.17 270.00,320.03 270.12,319.88 270.25,319.74 270.38,319.59 270.50,319.43 270.62,319.28 270.75,319.12 270.88,318.96 271.00,318.80 271.12,318.64 271.25,318.47 271.38,318.30 271.50,318.13 271.62,317.95M272.25,317.05 272.38,316.86 272.50,316.67 272.62,316.48 272.75,316.28 272.88,316.09 273.00,315.89 273.12,315.69 273.25,315.48 273.38,315.28 273.50,315.07 273.62,314.86 273.75,314.65 273.88,314.43 274.00,314.21 274.12,314.00 274.25,313.77 274.38,313.55 274.50,313.33 274.62,313.10 274.75,312.87 274.88,312.64 275.00,312.40 275.12,312.17 275.25,311.93 275.38,311.69 275.50,311.45 275.62,311.21M276.25,309.96 276.38,309.70 276.50,309.44 276.62,309.18 276.75,308.92 276.88,308.66 277.00,308.39 277.12,308.13 277.25,307.86 277.38,307.59 277.50,307.31 277.62,307.04 277.75,306.76 277.88,306.49 278.00,306.21 278.12,305.92 278.25,305.64 278.38,305.36 278.50,305.07 278.62,304.78 278.75,304.49 278.88,304.20 279.00,303.91 279.12,303.61 279.25,303.32 279.38,303.02 279.50,302.72 279.62,302.42M280.25,300.89 280.38,300.58 280.50,300.26 280.62,299.95 280.75,299.64 280.88,299.32 281.00,299.00 281.12,298.68 281.25,298.36 281.38,298.04 281.50,297.72 281.62,297.39 281.75,297.07 281.88,296.74 282.00,296.41 282.12,296.08 282.25,295.75 282.38,295.42 282.50,295.09 282.62,294.75 282.75,294.42 282.88,294.08 283.00,293.74 283.12,293.40 283.25,293.06 283.38,292.72 283.50,292.38 283.62,292.04M284.25,290.30 284.38,289.95 284.50,289.60 284.62,289.25 284.75,288.90 284.88,288.55 285.00,288.19 285.12,287.84 285.25,287.48 285.38,287.13 285.50,286.77 285.62,286.41 285.75,286.05 285.88,285.69 286.00,285.33 286.12,284.97 286.25,284.61 286.38,284.25 286.50,283.89 286.62,283.52 286.75,283.16 286.88,282.79 287.00,282.43 287.12,282.06 287.25,281.70 287.38,281.33 287.50,280.96 287.62,280.59M288.25,278.75 288.38,278.38 288.50,278.01 288.62,277.64 288.75,277.26 288.88,276.89 289.00,276.52 289.12,276.15 289.25,275.78 289.38,275.40 289.50,275.03 289.62,274.66 289.75,274.28 289.88,273.91 290.00,273.54 290.12,273.16 290.25,272.79 290.38,272.42 290.50,272.04 290.62,271.67 290.75,271.29 290.88,270.92 291.00,270.55 291.12,270.17 291.25,269.80 291.38,269.43 291.50,269.05 291.62,268.68M292.25,266.81 292.38,266.44 292.50,266.07 292.62,265.70 292.75,265.32 292.88,264.95 293.00,264.58 293.12,264.21 293.25,263.84 293.38,263.47 293.50,263.10 293.62,262.73 293.75,262.36 293.88,262.00 294.00,261.63 294.12,261.26 294.25,260.89 294.38,260.53 294.50,260.16 294.62,259.80 294.75,259.43 294.88,259.07 295.00,258.70 295.12,258.34 295.25,257.98 295.38,257.62 295.50,257.26 295.62,256.90M296.25,255.11 296.38,254.75 296.50,254.40 296.62,254.04 296.75,253.69 296.88,253.34 297.00,252.99 297.12,252.64 297.25,252.29 297.38,251.94 297.50,251.59 297.62,251.24 297.75,250.90 297.88,250.55 298.00,250.21 298.12,249.87 298.25,249.53 298.38,249.19 298.50,248.85 298.62,248.51 298.75,248.17 298.88,247.84 299.00,247.50 299.12,247.17 299.25,246.84 299.38,246.51 299.50,246.18 299.62,245.85M300.25,244.23 300.38,243.91 300.50,243.59 300.62,243.27 300.75,242.96 300.88,242.64 301.00,242.33 301.12,242.02 301.25,241.71 301.38,241.40 301.50,241.09 301.62,240.78 301.75,240.48 301.88,240.18 302.00,239.87 302.12,239.57 302.25,239.28 302.38,238.98 302.50,238.69 302.62,238.39 302.75,238.10 302.88,237.81 303.00,237.52 303.12,237.24 303.25,236.95 303.38,236.67 303.50,236.39 303.62,236.11M304.25,234.74 304.38,234.47 304.50,234.20 304.62,233.93 304.75,233.67 304.88,233.41 305.00,233.15 305.12,232.89 305.25,232.64 305.38,232.38 305.50,232.13 305.62,231.88 305.75,231.63 305.88,231.39 306.00,231.14 306.12,230.90 306.25,230.66 306.38,230.42 306.50,230.19 306.62,229.96 306.75,229.72 306.88,229.49 307.00,229.27 307.12,229.04 307.25,228.82 307.38,228.60 307.50,228.38 307.62,228.16M308.25,227.11 308.38,226.91 308.50,226.71 308.62,226.51 308.75,226.31 308.88,226.12 309.00,225.92 309.12,225.73 309.25,225.55 309.38,225.36 309.50,225.18 309.62,225.00 309.75,224.82 309.88,224.64 310.00,224.47 310.12,224.30 310.25,224.13 310.38,223.96 310.50,223.80 310.62,223.63 310.75,223.47 310.88,223.32 311.00,223.16 311.12,223.01 311.25,222.86 311.38,222.71 311.50,222.57 311.62,222.42M312.25,221.75 312.38,221.62 312.50,221.49 312.62,221.37 312.75,221.25 312.88,221.13 313.00,221.02 313.12,220.91 313.25,220.79 313.38,220.69 313.50,220.58 313.62,220.48 313.75,220.38 313.88,220.28 314.00,220.19 314.12,220.09 314.25,220.00 314.38,219.92 314.50,219.83 314.62,219.75 314.75,219.67 314.88,219.59 315.00,219.52 315.12,219.45 315.25,219.38 315.38,219.31 315.50,219.25 315.62,219.19M316.25,218.92 316.38,218.87 316.50,218.83 316.62,218.79 316.75,218.75 316.88,218.72 317.00,218.68 317.12,218.65 317.25,218.63 317.38,218.60 317.50,218.58 317.62,218.56 317.75,218.54 317.88,218.53 318.00,218.52 318.12,218.51 318.25,218.50 318.38,218.50 318.50,218.50 318.62,218.50 318.75,218.51 318.88,218.51 319.00,218.52 319.12,218.54 319.25,218.55 319.38,218.57 319.50,218.59 319.62,218.61M320.25,218.77 320.38,218.81 320.50,218.85 320.62,218.89 320.75,218.94 320.88,218.99 321.00,219.04 321.12,219.10 321.25,219.15 321.38,219.21 321.50,219.27 321.62,219.34 321.75,219.41 321.88,219.48 322.00,219.55 322.12,219.63 322.25,219.70 322.38,219.79 322.50,219.87 322.62,219.95 322.75,220.04 322.88,220.13 323.00,220.23 323.12,220.32 323.25,220.42 323.38,220.52 323.50,220.63 323.62,220.73M324.25,221.30 324.38,221.42 324.50,221.55 324.62,221.68 324.75,221.80 324.88,221.94 325.00,222.07 325.12,222.21 325.25,222.34 325.38,222.49 325.50,222.63 325.62,222.78 325.75,222.92 325.88,223.08 326.00,223.23 326.12,223.39 326.25,223.54 326.38,223.70 326.50,223.87 326.62,224.03 326.75,224.20 326.88,224.37 327.00,224.54 327.12,224.72 327.25,224.90 327.38,225.07 327.50,225.26 327.62,225.44M328.25,226.40 328.38,226.59 328.50,226.79 328.62,227.00 328.75,227.20 328.88,227.41 329.00,227.62 329.12,227.83 329.25,228.04 329.38,228.26 329.50,228.47 329.62,228.69 329.75,228.92 329.88,229.14 330.00,229.37 330.12,229.59 330.25,229.82 330.38,230.06 330.50,230.29 330.62,230.53 330.75,230.77 330.88,231.01 331.00,231.25 331.12,231.49 331.25,231.74 331.38,231.99 331.50,232.24 331.62,232.49M332.25,233.79 332.38,234.05 332.50,234.32 332.62,234.58 332.75,234.85 332.88,235.12 333.00,235.40 333.12,235.67 333.25,235.95 333.38,236.23 333.50,236.51 333.62,236.79 333.75,237.07 333.88,237.36 334.00,237.65 334.12,237.94 334.25,238.23 334.38,238.52 334.50,238.81 334.62,239.11 334.75,239.41 334.88,239.70 335.00,240.01 335.12,240.31 335.25,240.61 335.38,240.92 335.50,241.22 335.62,241.53M336.25,243.09 336.38,243.41 336.50,243.73 336.62,244.05 336.75,244.37 336.88,244.69 337.00,245.01 337.12,245.34 337.25,245.67 337.38,245.99 337.50,246.32 337.62,246.65 337.75,246.98 337.88,247.32 338.00,247.65 338.12,247.98 338.25,248.32 338.38,248.66 338.50,249.00 338.62,249.34 338.75,249.68 338.88,250.02 339.00,250.36 339.12,250.70 339.25,251.05 339.38,251.40 339.50,251.74 339.62,252.09M340.25,253.84 340.38,254.20 340.50,254.55 340.62,254.91 340.75,255.26 340.88,255.62 341.00,255.98 341.12,256.33 341.25,256.69 341.38,257.05 341.50,257.41 341.62,257.77 341.75,258.14 341.88,258.50 342.00,258.86 342.12,259.23 342.25,259.59 342.38,259.95 342.50,260.32 342.62,260.69 342.75,261.05 342.88,261.42 343.00,261.79 343.12,262.16 343.25,262.52 343.38,262.89 343.50,263.26 343.62,263.63M344.25,265.49 344.38,265.86 344.50,266.23 344.62,266.60 344.75,266.98 344.88,267.35 345.00,267.72 345.12,268.09 345.25,268.47 345.38,268.84 345.50,269.21 345.62,269.59 345.75,269.96 345.88,270.34 346.00,270.71 346.12,271.08 346.25,271.46 346.38,271.83 346.50,272.21 346.62,272.58 346.75,272.95 346.88,273.33 347.00,273.70 347.12,274.07 347.25,274.45 347.38,274.82 347.50,275.19 347.62,275.57M348.25,277.43 348.38,277.80 348.50,278.17 348.62,278.54 348.75,278.91 348.88,279.28 349.00,279.65 349.12,280.02 349.25,280.39 349.38,280.75 349.50,281.12 349.62,281.49 349.75,281.86 349.88,282.22 350.00,282.59 350.12,282.95 350.25,283.32 350.38,283.68 350.50,284.04 350.62,284.41 350.75,284.77 350.88,285.13 351.00,285.49 351.12,285.85 351.25,286.21 351.38,286.57 351.50,286.93 351.62,287.28M352.25,289.05 352.38,289.41 352.50,289.76 352.62,290.11 352.75,290.46 352.88,290.80 353.00,291.15 353.12,291.50 353.25,291.84 353.38,292.19 353.50,292.53 353.62,292.87 353.75,293.21 353.88,293.55 354.00,293.89 354.12,294.23 354.25,294.56 354.38,294.90 354.50,295.23 354.62,295.56 354.75,295.90 354.88,296.23 355.00,296.56" fill="none" stroke="#00ffff" stroke-width="1"/><path d="M83.25,463.95 83.38,463.70 83.50,463.45 83.62,463.20M84.25,461.96 84.38,461.71 84.50,461.46 84.62,461.21 84.75,460.96 84.88,460.71 85.00,460.46 85.12,460.21 85.25,459.96 85.38,459.71 85.50,459.47 85.62,459.22 85.75,458.97 85.88,458.72 86.00,458.47 86.12,458.22 86.25,457.97 86.38,457.72 86.50,457.47 86.62,457.22 86.75,456.97 86.88,456.72 87.00,456.47 87.12,456.22 87.25,455.98 87.38,455.73 87.50,455.48 87.62,455.23M88.25,453.98 88.38,453.73 88.50,453.48 88.62,453.23 88.75,452.98 88.88,452.73 89.00,452.49 89.12,452.24 89.25,451.99 89.38,451.74 89.50,451.49 89.62,451.24 89.75,450.99 89.88,450.74 90.00,450.49 90.12,450.24 90.25,449.99 90.38,449.74 90.50,449.49 90.62,449.24 90.75,449.00 90.88,448.75 91.00,448.50 91.12,448.25 91.25,448.00 91.38,447.75 91.50,447.50 91.62,447.25M92.25,446.00 92.38,445.75 92.50,445.51 92.62,445.26 92.75,445.01 92.88,444.76 93.00,444.51 93.12,444.26 93.25,444.01 93.38,443.76 93.50,443.51 93.62,443.26 93.75,443.01 93.88,442.76 94.00,442.51 94.12,442.26 94.25,442.02 94.38,441.77 94.50,441.52 94.62,441.27 94.75,441.02 94.88,440.77 95.00,440.52 95.12,440.27 95.25,440.02 95.38,439.77 95.50,439.52 95.62,439.27M96.25,438.03 96.38,437.78 96.50,437.53 96.62,437.28 96.75,437.03 96.88,436.78 97.00,436.53 97.12,436.28 97.25,436.03 97.38,435.78 97.50,435.53 97.62,435.28 97.75,435.03 97.88,434.79 98.00,434.54 98.12,434.29 98.25,434.04 98.38,433.79 98.50,433.54 98.62,433.29 98.75,433.04 98.88,432.79 99.00,432.54 99.12,432.29 99.25,432.04 99.38,431.79 99.50,431.54 99.62,431.30M100.25,430.05 100.38,429.80 100.50,429.55 100.62,429.30 100.75,429.05 100.88,428.80 101.00,428.55 101.12,428.30 101.25,428.05 101.38,427.81 101.50,427.56 101.62,427.31 101.75,427.06 101.88,426.81 102.00,426.56 102.12,426.31 102.25,426.06 102.38,425.81 102.50,425.56 102.62,425.31 102.75,425.06 102.88,424.81 103.00,424.56 103.12,424.32 103.25,424.07 103.38,423.82 103.50,423.57 103.62,423.32M104.25,422.07 104.38,421.82 104.50,421.57 104.62,421.32 104.75,421.07 104.88,420.83 105.00,420.58 105.12,420.33 105.25,420.08 105.38,419.83 105.50,419.58 105.62,419.33 105.75,419.08 105.88,418.83 106.00,418.58 106.12,418.33 106.25,418.08 106.38,417.83 106.50,417.58 106.62,417.34 106.75,417.09 106.88,416.84 107.00,416.59 107.12,416.34 107.25,416.09 107.38,415.84 107.50,415.59 107.62,415.34M108.25,414.09 108.38,413.85 108.50,413.60 108.62,413.35 108.75,413.10 108.88,412.85 109.00,412.60 109.12,412.35 109.25,412.10 109.38,411.85 109.50,411.60 109.62,411.35 109.75,411.10 109.88,410.85 110.00,410.60 110.12,410.35 110.25,410.11 110.38,409.86 110.50,409.61 110.62,409.36 110.75,409.11 110.88,408.86 111.00,408.61 111.12,408.36 111.25,408.11 111.38,407.86 111.50,407.61 111.62,407.36M112.25,406.12 112.38,405.87 112.50,405.62 112.62,405.37 112.75,405.12 112.88,404.87 113.00,404.62 113.12,404.37 113.25,404.12 113.38,403.87 113.50,403.62 113.62,403.37 113.75,403.13 113.88,402.88 114.00,402.63 114.12,402.38 114.25,402.13 114.38,401.88 114.50,401.63 114.62,401.38 114.75,401.13 114.88,400.88 115.00,400.63 115.12,400.38 115.25,400.13 115.38,399.88 115.50,399.64 115.62,399.39M116.25,398.14 116.38,397.89 116.50,397.64 116.62,397.39 116.75,397.14 116.88,396.89 117.00,396.64 117.12,396.39 117.25,396.15 117.38,395.90 117.50,395.65 117.62,395.40 117.75,395.15 117.88,394.90 118.00,394.65 118.12,394.40 118.25,394.15 118.38,393.90 118.50,393.65 118.62,393.40 118.75,393.15 118.88,392.90 119.00,392.66 119.12,392.41 119.25,392.16 119.38,391.91 119.50,391.66 119.62,391.41M120.25,390.16 120.38,389.91 120.50,389.66 120.62,389.41 120.75,389.17 120.88,388.92 121.00,388.67 121.12,388.42 121.25,388.17 121.38,387.92 121.50,387.67 121.62,387.42 121.75,387.17 121.88,386.92 122.00,386.67 122.12,386.42 122.25,386.17 122.38,385.92 122.50,385.68 122.62,385.43 122.75,385.18 122.88,384.93 123.00,384.68 123.12,384.43 123.25,384.18 123.38,383.93 123.50,383.68 123.62,383.43M124.25,382.18 124.38,381.94 124.50,381.69 124.62,381.44 124.75,381.19 124.88,380.94 125.00,380.69 125.12,380.44 125.25,380.19 125.38,379.94 125.50,379.69 125.62,379.44 125.75,379.19 125.88,378.94 126.00,378.69 126.12,378.45 126.25,378.20 126.38,377.95 126.50,377.70 126.62,377.45 126.75,377.20 126.88,376.95 127.00,376.70 127.12,376.45 127.25,376.20 127.38,375.95 127.50,375.70 127.62,375.45M128.25,374.21 128.38,373.96 128.50,373.71 128.62,373.46 128.75,373.21 128.88,372.96 129.00,372.71 129.12,372.46 129.25,372.21 129.38,371.96 129.50,371.71 129.62,371.47 129.75,371.22 129.88,370.97 130.00,370.72 130.12,370.47 130.25,370.22 130.38,369.97 130.50,369.72 130.62,369.47 130.75,369.22 130.88,368.97 131.00,368.72 131.12,368.47 131.25,368.22 131.38,367.98 131.50,367.73 131.62,367.48M132.25,366.23 132.38,365.98 132.50,365.73 132.62,365.48 132.75,365.23 132.88,364.98 133.00,364.73 133.12,364.49 133.25,364.24 133.38,363.99 133.50,363.74 133.62,363.49 133.75,363.24 133.88,362.99 134.00,362.74 134.12,362.49 134.25,362.24 134.38,361.99 134.50,361.74 134.62,361.49 134.75,361.24 134.88,361.00 135.00,360.75 135.12,360.50 135.25,360.25 135.38,360.00 135.50,359.75 135.62,359.50M136.25,358.25 136.38,358.00 136.50,357.75 136.62,357.51 136.75,357.26 136.88,357.01 137.00,356.76 137.12,356.51 137.25,356.26 137.38,356.01 137.50,355.76 137.62,355.51 137.75,355.26 137.88,355.01 138.00,354.76 138.12,354.51 138.25,354.26 138.38,354.02 138.50,353.77 138.62,353.52 138.75,353.27 138.88,353.02 139.00,352.77 139.12,352.52 139.25,352.27 139.38,352.02 139.50,351.77 139.62,351.52M140.25,350.28 140.38,350.03 140.50,349.78 140.62,349.53 140.75,349.28 140.88,349.03 141.00,348.78 141.12,348.53 141.25,348.28 141.38,348.03 141.50,347.78 141.62,347.53 141.75,347.28 141.88,347.03 142.00,346.79 142.12,346.54 142.25,346.29 142.38,346.04 142.50,345.79 142.62,345.54 142.75,345.29 142.88,345.04 143.00,344.79 143.12,344.54 143.25,344.29 143.38,344.04 143.50,343.79 143.62,343.54M144.25,342.30 144.38,342.05 144.50,341.80 144.62,341.55 144.75,341.30 144.88,341.05 145.00,340.80 145.12,340.55 145.25,340.30 145.38,340.05 145.50,339.81 145.62,339.56 145.75,339.31 145.88,339.06 146.00,338.81 146.12,338.56 146.25,338.31 146.38,338.06 146.50,337.81 146.62,337.56 146.75,337.31 146.88,337.06 147.00,336.81 147.12,336.56 147.25,336.32 147.38,336.07 147.50,335.82 147.62,335.57M148.25,334.32 148.38,334.07 148.50,333.82 148.62,333.57 148.75,333.32 148.88,333.07 149.00,332.83 149.12,332.58 149.25,332.33 149.38,332.08 149.50,331.83 149.62,331.58 149.75,331.33 149.88,331.08 150.00,330.83 150.12,330.58 150.25,330.33 150.38,330.08 150.50,329.83 150.62,329.58 150.75,329.34 150.88,329.09 151.00,328.84 151.12,328.59 151.25,328.34 151.38,328.09 151.50,327.84 151.62,327.59M152.25,326.34 152.38,326.09 152.50,325.85 152.62,325.60 152.75,325.35 152.88,325.10 153.00,324.85 153.12,324.60 153.25,324.35 153.38,324.10 153.50,323.85 153.62,323.60 153.75,323.35 153.88,323.10 154.00,322.85 154.12,322.60 154.25,322.35 154.38,322.11 154.50,321.86 154.62,321.61 154.75,321.36 154.88,321.11 155.00,320.86 155.12,320.61 155.25,320.36 155.38,320.11 155.50,319.86 155.62,319.61M156.25,318.37 156.38,318.12 156.50,317.87 156.62,317.62 156.75,317.37 156.88,317.12 157.00,316.87 157.12,316.62 157.25,316.37 157.38,316.12 157.50,315.87 157.62,315.62 157.75,315.37 157.88,315.13 158.00,314.88 158.12,314.63 158.25,314.38 158.38,314.13 158.50,313.88 158.62,313.63 158.75,313.38 158.88,313.13 159.00,312.88 159.12,312.63 159.25,312.38 159.38,312.13 159.50,311.88 159.62,311.64M160.25,310.39 160.38,310.14 160.50,309.89 160.62,309.64 160.75,309.39 160.88,309.14 161.00,308.89 161.12,308.64 161.25,308.39 161.38,308.15 161.50,307.90 161.62,307.65 161.75,307.40 161.88,307.15 162.00,306.90 162.12,306.65 162.25,306.40 162.38,306.15 162.50,305.90 162.62,305.65 162.75,305.40 162.88,305.15 163.00,304.90 163.12,304.66 163.25,304.41 163.38,304.16 163.50,303.91 163.62,303.66M164.25,302.41 164.38,302.16 164.50,301.91 164.62,301.66 164.75,301.41 164.88,301.17 165.00,300.92 165.12,300.67 165.25,300.42 165.38,300.17 165.50,299.92 165.62,299.67 165.75,299.42 165.88,299.17 166.00,298.92 166.12,298.67 166.25,298.42 166.38,298.17 166.50,297.92 166.62,297.68 166.75,297.43 166.88,297.18 167.00,296.93 167.12,296.68 167.25,296.43 167.38,296.18 167.50,295.93 167.62,295.68M168.25,294.43 168.38,294.18 168.50,293.94 168.62,293.69 168.75,293.44 168.88,293.19 169.00,292.94 169.12,292.69 169.25,292.44 169.38,292.19 169.50,291.94 169.62,291.69 169.75,291.44 169.88,291.19 170.00,290.94 170.12,290.69 170.25,290.45 170.38,290.20 170.50,289.95 170.62,289.70 170.75,289.45 170.88,289.20 171.00,288.95 171.12,288.70 171.25,288.45 171.38,288.20 171.50,287.95 171.62,287.70M172.25,286.46 172.38,286.21 172.50,285.96 172.62,285.71 172.75,285.46 172.88,285.21 173.00,284.96 173.12,284.71 173.25,284.46 173.38,284.21 173.50,283.96 173.62,283.71 173.75,283.47 173.88,283.22 174.00,282.97 174.12,282.72 174.25,282.47 174.38,282.22 174.50,281.97 174.62,281.72 174.75,281.47 174.88,281.22 175.00,280.97 175.12,280.72 175.25,280.47 175.38,280.22 175.50,279.98 175.62,279.73M176.25,278.48 176.38,278.23 176.50,277.98 176.62,277.73 176.75,277.48 176.88,277.23 177.00,276.98 177.12,276.73 177.25,276.49 177.38,276.24 177.50,275.99 177.62,275.74 177.75,275.49 177.88,275.24 178.00,274.99 178.12,274.74 178.25,274.49 178.38,274.24 178.50,273.99 178.62,273.74 178.75,273.49 178.88,273.24 179.00,273.00 179.12,272.75 179.25,272.50 179.38,272.25 179.50,272.00 179.62,271.75M180.25,270.50 180.38,270.25 180.50,270.00 180.62,269.75 180.75,269.51 180.88,269.26 181.00,269.01 181.12,268.76 181.25,268.51 181.38,268.26 181.50,268.01 181.62,267.76 181.75,267.51 181.88,267.26 182.00,267.01 182.12,266.76 182.25,266.51 182.38,266.26 182.50,266.02 182.62,265.77 182.75,265.52 182.88,265.27 183.00,265.02 183.12,264.77 183.25,264.52 183.38,264.27 183.50,264.02 183.62,263.77M184.25,262.52 184.38,262.28 184.50,262.03 184.62,261.78 184.75,261.53 184.88,261.28 185.00,261.03 185.12,260.78 185.25,260.53 185.38,260.28 185.50,260.03 185.62,259.78 185.75,259.53 185.88,259.28 186.00,259.03 186.12,258.79 186.25,258.54 186.38,258.29 186.50,258.04 186.62,257.79 186.75,257.54 186.88,257.29 187.00,257.04 187.12,256.79 187.25,256.54 187.38,256.29 187.50,256.04 187.62,255.79M188.25,254.55 188.38,254.30 188.50,254.05 188.62,253.80 188.75,253.55 188.88,253.30 189.00,253.05 189.12,252.80 189.25,252.55 189.38,252.30 189.50,252.05 189.62,251.81 189.75,251.56 189.88,251.31 190.00,251.06 190.12,250.81 190.25,250.56 190.38,250.31 190.50,250.06 190.62,249.81 190.75,249.56 190.88,249.31 191.00,249.06 191.12,248.81 191.25,248.56 191.38,248.32 191.50,248.07 191.62,247.82M192.25,246.57 192.38,246.32 192.50,246.07 192.62,245.82 192.75,245.57 192.88,245.32 193.00,245.07 193.12,244.83 193.25,244.58 193.38,244.33 193.50,244.08 193.62,243.83 193.75,243.58 193.88,243.33 194.00,243.08 194.12,242.83 194.25,242.58 194.38,242.33 194.50,242.08 194.62,241.83 194.75,241.58 194.88,241.34 195.00,241.09 195.12,240.84 195.25,240.59 195.38,240.34 195.50,240.09 195.62,239.84M196.25,238.59 196.38,238.34 196.50,238.09 196.62,237.85 196.75,237.60 196.88,237.35 197.00,237.10 197.12,236.85 197.25,236.60 197.38,236.35 197.50,236.10 197.62,235.85 197.75,235.60 197.88,235.35 198.00,235.10 198.12,234.85 198.25,234.60 198.38,234.35 198.50,234.11 198.62,233.86 198.75,233.61 198.88,233.36 199.00,233.11 199.12,232.86 199.25,232.61 199.38,232.36 199.50,232.11 199.62,231.86M200.25,230.62 200.38,230.37 200.50,230.12 200.62,229.87 200.75,229.62 200.88,229.37 201.00,229.12 201.12,228.87 201.25,228.62 201.38,228.37 201.50,228.12 201.62,227.87 201.75,227.62 201.88,227.37 202.00,227.13 202.12,226.88 202.25,226.63 202.38,226.38 202.50,226.13 202.62,225.88 202.75,225.63 202.88,225.38 203.00,225.13 203.12,224.88 203.25,224.63 203.38,224.38 203.50,224.13 203.62,223.88M204.25,222.64 204.38,222.39 204.50,222.14 204.62,221.89 204.75,221.64 204.88,221.39 205.00,221.14 205.12,220.89 205.25,220.64 205.38,220.39 205.50,220.15 205.62,219.90 205.75,219.65 205.88,219.40 206.00,219.15 206.12,218.90 206.25,218.65 206.38,218.40 206.50,218.15 206.62,217.90 206.75,217.65 206.88,217.40 207.00,217.15 207.12,216.90 207.25,216.66 207.38,216.41 207.50,216.16 207.62,215.91M208.25,214.66 208.38,214.41 208.50,214.16 208.62,213.91 208.75,213.66 208.88,213.41 209.00,213.17 209.12,212.92 209.25,212.67 209.38,212.42 209.50,212.17 209.62,211.92 209.75,211.67 209.88,211.42 210.00,211.17 210.12,210.92 210.25,210.67 210.38,210.42 210.50,210.17 210.62,209.92 210.75,209.68 210.88,209.43 211.00,209.18 211.12,208.93 211.25,208.68 211.38,208.43 211.50,208.18 211.62,207.93M212.25,206.68 212.38,206.43 212.50,206.18 212.62,205.94 212.75,205.69 212.88,205.44 213.00,205.19 213.12,204.94 213.25,204.69 213.38,204.44 213.50,204.19 213.62,203.94 213.75,203.69 213.88,203.44 214.00,203.19 214.12,202.94 214.25,202.69 214.38,202.45 214.50,202.20 214.62,201.95 214.75,201.70 214.88,201.45 215.00,201.20 215.12,200.95 215.25,200.70 215.38,200.45 215.50,200.20 215.62,199.95M216.25,198.71 216.38,198.46 216.50,198.21 216.62,197.96 216.75,197.71 216.88,197.46 217.00,197.21 217.12,196.96 217.25,196.71 217.38,196.46 217.50,196.21 217.62,195.96 217.75,195.71 217.88,195.47 218.00,195.22 218.12,194.97 218.25,194.72 218.38,194.47 218.50,194.22 218.62,193.97 218.75,193.72 218.88,193.47 219.00,193.22 219.12,192.97 219.25,192.72 219.38,192.47 219.50,192.22 219.62,191.98M220.25,190.73 220.38,190.48 220.50,190.23 220.62,189.98 220.75,189.73 220.88,189.48 221.00,189.23 221.12,188.98 221.25,188.73 221.38,188.49 221.50,188.24 221.62,187.99 221.75,187.74 221.88,187.49 222.00,187.24 222.12,186.99 222.25,186.74 222.38,186.49 222.50,186.24 222.62,185.99 222.75,185.74 222.88,185.49 223.00,185.24 223.12,185.00 223.25,184.75 223.38,184.50 223.50,184.25 223.62,184.00M224.25,182.75 224.38,182.50 224.50,182.25 224.62,182.00 224.75,181.75 224.88,181.51 225.00,181.26 225.12,181.01 225.25,180.76 225.38,180.51 225.50,180.26 225.62,180.01 225.75,179.76 225.88,179.51 226.00,179.26 226.12,179.01 226.25,178.76 226.38,178.51 226.50,178.26 226.62,178.02 226.75,177.77 226.88,177.52 227.00,177.27 227.12,177.02 227.25,176.77 227.38,176.52 227.50,176.27 227.62,176.02M228.25,174.77 228.38,174.52 228.50,174.28 228.62,174.03 228.75,173.78 228.88,173.53 229.00,173.28 229.12,173.03 229.25,172.78 229.38,172.53 229.50,172.28 229.62,172.03 229.75,171.78 229.88,171.53 230.00,171.28 230.12,171.03 230.25,170.79 230.38,170.54 230.50,170.29 230.62,170.04 230.75,169.79 230.88,169.54 231.00,169.29 231.12,169.04 231.25,168.79 231.38,168.54 231.50,168.29 231.62,168.04M232.25,166.80 232.38,166.55 232.50,166.30 232.62,166.05 232.75,165.80 232.88,165.55 233.00,165.30 233.12,165.05 233.25,164.80 233.38,164.55 233.50,164.30 233.62,164.05 233.75,163.81 233.88,163.56 234.00,163.31 234.12,163.06 234.25,162.81 234.38,162.56 234.50,162.31 234.62,162.06 234.75,161.81 234.88,161.56 235.00,161.31 235.12,161.06 235.25,160.81 235.38,160.56 235.50,160.32 235.62,160.07M236.25,158.82 236.38,158.57 236.50,158.32 236.62,158.07 236.75,157.82 236.88,157.57 237.00,157.32 237.12,157.07 237.25,156.83 237.38,156.58 237.50,156.33 237.62,156.08 237.75,155.83 237.88,155.58 238.00,155.33 238.12,155.08 238.25,154.83 238.38,154.58 238.50,154.33 238.62,154.08 238.75,153.83 238.88,153.58 239.00,153.34 239.12,153.09 239.25,152.84 239.38,152.59 239.50,152.34 239.62,152.09M240.25,150.84 240.38,150.59 240.50,150.34 240.62,150.09 240.75,149.85 240.88,149.60 241.00,149.35 241.12,149.10 241.25,148.85 241.38,148.60 241.50,148.35 241.62,148.10 241.75,147.85 241.88,147.60 242.00,147.35 242.12,147.10 242.25,146.85 242.38,146.60 242.50,146.35 242.62,146.11 242.75,145.86 242.88,145.61 243.00,145.36 243.12,145.11 243.25,144.86 243.38,144.61 243.50,144.36 243.62,144.11M244.25,142.86 244.38,142.62 244.50,142.37 244.62,142.12 244.75,141.87 244.88,141.62 245.00,141.37 245.12,141.12 245.25,140.87 245.38,140.62 245.50,140.37 245.62,140.12 245.75,139.87 245.88,139.62 246.00,139.37 246.12,139.13 246.25,138.88 246.38,138.63 246.50,138.38 246.62,138.13 246.75,137.88 246.88,137.63 247.00,137.38 247.12,137.13 247.25,136.88 247.38,136.63 247.50,136.38 247.62,136.13M248.25,134.89 248.38,134.64 248.50,134.39 248.62,134.14 248.75,133.89 248.88,133.64 249.00,133.39 249.12,133.14 249.25,132.89 249.38,132.64 249.50,132.39 249.62,132.15 249.75,131.90 249.88,131.65 250.00,131.40 250.12,131.15 250.25,130.90 250.38,130.65 250.50,130.40 250.62,130.15 250.75,129.90 250.88,129.65 251.00,129.40 251.12,129.15 251.25,128.90 251.38,128.66 251.50,128.41 251.62,128.16M252.25,126.91 252.38,126.66 252.50,126.41 252.62,126.16 252.75,125.91 252.88,125.66 253.00,125.41 253.12,125.17 253.25,124.92 253.38,124.67 253.50,124.42 253.62,124.17 253.75,123.92 253.88,123.67 254.00,123.42 254.12,123.17 254.25,122.92 254.38,122.67 254.50,122.42 254.62,122.17 254.75,121.92 254.88,121.68 255.00,121.43 255.12,121.18 255.25,120.93 255.38,120.68 255.50,120.43 255.62,120.18M256.25,118.93 256.38,118.68 256.50,118.43 256.62,118.18 256.75,117.94 256.88,117.69 257.00,117.44 257.12,117.19 257.25,116.94 257.38,116.69 257.50,116.44 257.62,116.19 257.75,115.94 257.88,115.69 258.00,115.44 258.12,115.19 258.25,114.94 258.38,114.69 258.50,114.45 258.62,114.20 258.75,113.95 258.88,113.70 259.00,113.45 259.12,113.20 259.25,112.95 259.38,112.70 259.50,112.45 259.62,112.20M260.25,110.96 260.38,110.71 260.50,110.46 260.62,110.21 260.75,109.96 260.88,109.71 261.00,109.46 261.12,109.21 261.25,108.96 261.38,108.71 261.50,108.46 261.62,108.21 261.75,107.96 261.88,107.71 262.00,107.47 262.12,107.22 262.25,106.97 262.38,106.72 262.50,106.47 262.62,106.22 262.75,105.97 262.88,105.72 263.00,105.47 263.12,105.22 263.25,104.97 263.38,104.72 263.50,104.47 263.62,104.22M264.25,102.98 264.38,102.73 264.50,102.48 264.62,102.23 264.75,101.98 264.88,101.73 265.00,101.48 265.12,101.23 265.25,100.98 265.38,100.73 265.50,100.49 265.62,100.24 265.75,99.99 265.88,99.74 266.00,99.49 266.12,99.24 266.25,98.99 266.38,98.74 266.50,98.49 266.62,98.24 266.75,97.99 266.88,97.74 267.00,97.49 267.12,97.24 267.25,97.00 267.38,96.75 267.50,96.50 267.62,96.25M268.25,95.00 268.38,94.75 268.50,94.50 268.62,94.25 268.75,94.00 268.88,93.75 269.00,93.51 269.12,93.26 269.25,93.01 269.38,92.76 269.50,92.51 269.62,92.26 269.75,92.01 269.88,91.76 270.00,91.51 270.12,91.26 270.25,91.01 270.38,90.76 270.50,90.51 270.62,90.26 270.75,90.02 270.88,89.77 271.00,89.52 271.12,89.27 271.25,89.02 271.38,88.77 271.50,88.52 271.62,88.27M272.25,87.02 272.38,86.77 272.50,86.52 272.62,86.28 272.75,86.03 272.88,85.78 273.00,85.53 273.12,85.28 273.25,85.03 273.38,84.78 273.50,84.53 273.62,84.28 273.75,84.03 273.88,83.78 274.00,83.53 274.12,83.28 274.25,83.03 274.38,82.79 274.50,82.54 274.62,82.29 274.75,82.04 274.88,81.79 275.00,81.54 275.12,81.29 275.25,81.04" fill="none" stroke="#ff00ff" stroke-width="1.1"/><path d="M106.75,81.08 106.88,81.54 107.00,81.99 107.12,82.45 107.25,82.91 107.38,83.37 107.50,83.83 107.62,84.30M108.25,86.66 108.38,87.13 108.50,87.62 108.62,88.10 108.75,88.58 108.88,89.07 109.00,89.56 109.12,90.05 109.25,90.54 109.38,91.04 109.50,91.53 109.62,92.03 109.75,92.53 109.88,93.03 110.00,93.54 110.12,94.05 110.25,94.55 110.38,95.06 110.50,95.58 110.62,96.09 110.75,96.61 110.88,97.12 111.00,97.64 111.12,98.16 111.25,98.69 111.38,99.21 111.50,99.74 111.62,100.27M112.25,102.94 112.38,103.48 112.50,104.02 112.62,104.56 112.75,105.10 112.88,105.65 113.00,106.20 113.12,106.74 113.25,107.29 113.38,107.85 113.50,108.40 113.62,108.95 113.75,109.51 113.88,110.07 114.00,110.63 114.12,111.19 114.25,111.75 114.38,112.32 114.50,112.88 114.62,113.45 114.75,114.02 114.88,114.58 115.00,115.16 115.12,115.73 115.25,116.30 115.38,116.88 115.50,117.45 115.62,118.03M116.25,120.93 116.38,121.52 116.50,122.10 116.62,122.69 116.75,123.28 116.88,123.87 117.00,124.46 117.12,125.05 117.25,125.64 117.38,126.24 117.50,126.83 117.62,127.43 117.75,128.02 117.88,128.62 118.00,129.22 118.12,129.82 118.25,130.42 118.38,131.02 118.50,131.62 118.62,132.23 118.75,132.83 118.88,133.43 119.00,134.04 119.12,134.65 119.25,135.25 119.38,135.86 119.50,136.47 119.62,137.08M120.25,140.13 120.38,140.75 120.50,141.36 120.62,141.98 120.75,142.59 120.88,143.21 121.00,143.82 121.12,144.44 121.25,145.06 121.38,145.67 121.50,146.29 121.62,146.91 121.75,147.53 121.88,148.15 122.00,148.77 122.12,149.39 122.25,150.01 122.38,150.63 122.50,151.25 122.62,151.87 122.75,152.49 122.88,153.11 123.00,153.74 123.12,154.36 123.25,154.98 123.38,155.60 123.50,156.23 123.62,156.85M124.25,159.96 124.38,160.59 124.50,161.21 124.62,161.83 124.75,162.46 124.88,163.08 125.00,163.70 125.12,164.33 125.25,164.95 125.38,165.57 125.50,166.19 125.62,166.82 125.75,167.44 125.88,168.06 126.00,168.68 126.12,169.30 126.25,169.93 126.38,170.55 126.50,171.17 126.62,171.79 126.75,172.41 126.88,173.03 127.00,173.65 127.12,174.27 127.25,174.88 127.38,175.50 127.50,176.12 127.62,176.74M128.25,179.82 128.38,180.43 128.50,181.04 128.62,181.66 128.75,182.27 128.88,182.88 129.00,183.49 129.12,184.10 129.25,184.71 129.38,185.32 129.50,185.93 129.62,186.54 129.75,187.14 129.88,187.75 130.00,188.35 130.12,188.96 130.25,189.56 130.38,190.16 130.50,190.76 130.62,191.36 130.75,191.96 130.88,192.56 131.00,193.16 131.12,193.76 131.25,194.35 131.38,194.95 131.50,195.54 131.62,196.14M132.25,199.08 132.38,199.67 132.50,200.26 132.62,200.84 132.75,201.42 132.88,202.00 133.00,202.58 133.12,203.16 133.25,203.74 133.38,204.32 133.50,204.89 133.62,205.47 133.75,206.04 133.88,206.61 134.00,207.18 134.12,207.75 134.25,208.32 134.38,208.88 134.50,209.45 134.62,210.01 134.75,210.57 134.88,211.13 135.00,211.69 135.12,212.25 135.25,212.80 135.38,213.36 135.50,213.91 135.62,214.46M136.25,217.19 136.38,217.73 136.50,218.27 136.62,218.81 136.75,219.35 136.88,219.88 137.00,220.41 137.12,220.94 137.25,221.47 137.38,222.00 137.50,222.53 137.62,223.05 137.75,223.57 137.88,224.09 138.00,224.61 138.12,225.13 138.25,225.64 138.38,226.16 138.50,226.67 138.62,227.18 138.75,227.68 138.88,228.19 139.00,228.69 139.12,229.19 139.25,229.69 139.38,230.19 139.50,230.69 139.62,231.18M140.25,233.62 140.38,234.10 140.50,234.58 140.62,235.05 140.75,235.53 140.88,236.00 141.00,236.47 141.12,236.94 141.25,237.41 141.38,237.87 141.50,238.34 141.62,238.80 141.75,239.25 141.88,239.71 142.00,240.16 142.12,240.61 142.25,241.06 142.38,241.51 142.50,241.95 142.62,242.39 142.75,242.83 142.88,243.27 143.00,243.71 143.12,244.14 143.25,244.57 143.38,245.00 143.50,245.43 143.62,245.85M144.25,247.93 144.38,248.34 144.50,248.75 144.62,249.15 144.75,249.56 144.88,249.96 145.00,250.35 145.12,250.75 145.25,251.14 145.38,251.53 145.50,251.92 145.62,252.30 145.75,252.69 145.88,253.07 146.00,253.44 146.12,253.82 146.25,254.19 146.38,254.56 146.50,254.93 146.62,255.29 146.75,255.66 146.88,256.02 147.00,256.38 147.12,256.73 147.25,257.08 147.38,257.43 147.50,257.78 147.62,258.13M148.25,259.81 148.38,260.14 148.50,260.47 148.62,260.79 148.75,261.11 148.88,261.43 149.00,261.75 149.12,262.06 149.25,262.37 149.38,262.68 149.50,262.99 149.62,263.29 149.75,263.59 149.88,263.89 150.00,264.19 150.12,264.48 150.25,264.77 150.38,265.06 150.50,265.34 150.62,265.62 150.75,265.90 150.88,266.18 151.00,266.46 151.12,266.73 151.25,267.00 151.38,267.26 151.50,267.53 151.62,267.79M152.25,269.06 152.38,269.30 152.50,269.54 152.62,269.78 152.75,270.02 152.88,270.26 153.00,270.49 153.12,270.72 153.25,270.94 153.38,271.17 153.50,271.39 153.62,271.61 153.75,271.82 153.88,272.04 154.00,272.25 154.12,272.46 154.25,272.66 154.38,272.87 154.50,273.07 154.62,273.26 154.75,273.46 154.88,273.65 155.00,273.84 155.12,274.03 155.25,274.21 155.38,274.40 155.50,274.58 155.62,274.75M156.25,275.60 156.38,275.76 156.50,275.92 156.62,276.08 156.75,276.23 156.88,276.38 157.00,276.53 157.12,276.67 157.25,276.82 157.38,276.96 157.50,277.10 157.62,277.23 157.75,277.37 157.88,277.50 158.00,277.63 158.12,277.75 158.25,277.88 158.38,278.00 158.50,278.11 158.62,278.23 158.75,278.34 158.88,278.45 159.00,278.56 159.12,278.67 159.25,278.77 159.38,278.87 159.50,278.97 159.62,279.07M160.25,279.52 160.38,279.60 160.50,279.68 160.62,279.75 160.75,279.83 160.88,279.90 161.00,279.97 161.12,280.04 161.25,280.11 161.38,280.17 161.50,280.23 161.62,280.29 161.75,280.35 161.88,280.40 162.00,280.45 162.12,280.50 162.25,280.55 162.38,280.59 162.50,280.64 162.62,280.68 162.75,280.72 162.88,280.75 163.00,280.79 163.12,280.82 163.25,280.85 163.38,280.88 163.50,280.90 163.62,280.93M164.25,281.01 164.38,281.02 164.50,281.03 164.62,281.04 164.75,281.05 164.88,281.05 165.00,281.05 165.12,281.05 165.25,281.05 165.38,281.04 165.50,281.03 165.62,281.03 165.75,281.01 165.88,281.00 166.00,280.99 166.12,280.97 166.25,280.95 166.38,280.93 166.50,280.91 166.62,280.89 166.75,280.86 166.88,280.84 167.00,280.81 167.12,280.78 167.25,280.74 167.38,280.71 167.50,280.67 167.62,280.64M168.25,280.42 168.38,280.37 168.50,280.33 168.62,280.27 168.75,280.22 168.88,280.17 169.00,280.11 169.12,280.06 169.25,280.00 169.38,279.94 169.50,279.88 169.62,279.81 169.75,279.75 169.88,279.68 170.00,279.62 170.12,279.55 170.25,279.48 170.38,279.41 170.50,279.33 170.62,279.26 170.75,279.18 170.88,279.11 171.00,279.03 171.12,278.95 171.25,278.87 171.38,278.79 171.50,278.70 171.62,278.62M172.25,278.18 172.38,278.09 172.50,278.00 172.62,277.91 172.75,277.81 172.88,277.72 173.00,277.62 173.12,277.52 173.25,277.42 173.38,277.33 173.50,277.22 173.62,277.12 173.75,277.02 173.88,276.92 174.00,276.81 174.12,276.71 174.25,276.60 174.38,276.50 174.50,276.39 174.62,276.28 174.75,276.17 174.88,276.06 175.00,275.95 175.12,275.84 175.25,275.73 175.38,275.62 175.50,275.51 175.62,275.39M176.25,274.82 176.38,274.70 176.50,274.58 176.62,274.46 176.75,274.34 176.88,274.22 177.00,274.10 177.12,273.98 177.25,273.86 177.38,273.74 177.50,273.62 177.62,273.50 177.75,273.38 177.88,273.26 178.00,273.13 178.12,273.01 178.25,272.89 178.38,272.77 178.50,272.64 178.62,272.52 178.75,272.39 178.88,272.27 179.00,272.15 179.12,272.02 179.25,271.90 179.38,271.77 179.50,271.65 179.62,271.52M180.25,270.90 180.38,270.78 180.50,270.65 180.62,270.53 180.75,270.40 180.88,270.28 181.00,270.16 181.12,270.03 181.25,269.91 181.38,269.78 181.50,269.66 181.62,269.54 181.75,269.42 181.88,269.29 182.00,269.17 182.12,269.05 182.25,268.93 182.38,268.81 182.50,268.69 182.62,268.57 182.75,268.45 182.88,268.33 183.00,268.21 183.12,268.09 183.25,267.97 183.38,267.85 183.50,267.74 183.62,267.62M184.25,267.05 184.38,266.94 184.50,266.82 184.62,266.71 184.75,266.60 184.88,266.49 185.00,266.38 185.12,266.27 185.25,266.17 185.38,266.06 185.50,265.95 185.62,265.85 185.75,265.74 185.88,265.64 186.00,265.54 186.12,265.44 186.25,265.33 186.38,265.24 186.50,265.14 186.62,265.04 186.75,264.94 186.88,264.85 187.00,264.75 187.12,264.66 187.25,264.56 187.38,264.47 187.50,264.38 187.62,264.29M188.25,263.86 188.38,263.78 188.50,263.70 188.62,263.62 188.75,263.54 188.88,263.46 189.00,263.39 189.12,263.31 189.25,263.24 189.38,263.17 189.50,263.09 189.62,263.02 189.75,262.96 189.88,262.89 190.00,262.82 190.12,262.76 190.25,262.70 190.38,262.64 190.50,262.58 190.62,262.52 190.75,262.46 190.88,262.41 191.00,262.36 191.12,262.30 191.25,262.25 191.38,262.21 191.50,262.16 191.62,262.11M192.25,261.91 192.38,261.88 192.50,261.84 192.62,261.81 192.75,261.78 192.88,261.75 193.00,261.73 193.12,261.70 193.25,261.68 193.38,261.66 193.50,261.64 193.62,261.62 193.75,261.61 193.88,261.59 194.00,261.58 194.12,261.57 194.25,261.56 194.38,261.56 194.50,261.55 194.62,261.55 194.75,261.55 194.88,261.55 195.00,261.56 195.12,261.56 195.25,261.57 195.38,261.58 195.50,261.59 195.62,261.61M196.25,261.71 196.38,261.73 196.50,261.76 196.62,261.79 196.75,261.83 196.88,261.86 197.00,261.90 197.12,261.94 197.25,261.98 197.38,262.02 197.50,262.07 197.62,262.12 197.75,262.17 197.88,262.22 198.00,262.28 198.12,262.33 198.25,262.39 198.38,262.46 198.50,262.52 198.62,262.59 198.75,262.66 198.88,262.73 199.00,262.80 199.12,262.88 199.25,262.95 199.38,263.04 199.50,263.12 199.62,263.20M200.25,263.67 200.38,263.77 200.50,263.87 200.62,263.97 200.75,264.08 200.88,264.19 201.00,264.30 201.12,264.42 201.25,264.53 201.38,264.65 201.50,264.77 201.62,264.90 201.75,265.02 201.88,265.15 202.00,265.29 202.12,265.42 202.25,265.56 202.38,265.70 202.50,265.84 202.62,265.98 202.75,266.13 202.88,266.28 203.00,266.43 203.12,266.59 203.25,266.74 203.38,266.90 203.50,267.07 203.62,267.23M204.25,268.10 204.38,268.28 204.50,268.46 204.62,268.65 204.75,268.83 204.88,269.02 205.00,269.22 205.12,269.41 205.25,269.61 205.38,269.81 205.50,270.02 205.62,270.23 205.75,270.44 205.88,270.65 206.00,270.86 206.12,271.08 206.25,271.30 206.38,271.52 206.50,271.75 206.62,271.97 206.75,272.21 206.88,272.44 207.00,272.67 207.12,272.91 207.25,273.15 207.38,273.40 207.50,273.64 207.62,273.89M208.25,275.18 208.38,275.44 208.50,275.71 208.62,275.98 208.75,276.25 208.88,276.53 209.00,276.81 209.12,277.09 209.25,277.37 209.38,277.66 209.50,277.95 209.62,278.24 209.75,278.53 209.88,278.83 210.00,279.13 210.12,279.43 210.25,279.73 210.38,280.04 210.50,280.35 210.62,280.66 210.75,280.98 210.88,281.29 211.00,281.61 211.12,281.94 211.25,282.26 211.38,282.59 211.50,282.92 211.62,283.25M212.25,284.96 212.38,285.31 212.50,285.66 212.62,286.01 212.75,286.37 212.88,286.73 213.00,287.09 213.12,287.45 213.25,287.82 213.38,288.19 213.50,288.56 213.62,288.93 213.75,289.31 213.88,289.69 214.00,290.07 214.12,290.45 214.25,290.84 214.38,291.23 214.50,291.62 214.62,292.01 214.75,292.41 214.88,292.80 215.00,293.20 215.12,293.61 215.25,294.01 215.38,294.42 215.50,294.83 215.62,295.25M216.25,297.34 216.38,297.77 216.50,298.20 216.62,298.63 216.75,299.07 216.88,299.50 217.00,299.94 217.12,300.38 217.25,300.82 217.38,301.27 217.50,301.72 217.62,302.17 217.75,302.62 217.88,303.07 218.00,303.53 218.12,303.99 218.25,304.45 218.38,304.91 218.50,305.38 218.62,305.85 218.75,306.31 218.88,306.79 219.00,307.26 219.12,307.74 219.25,308.21 219.38,308.69 219.50,309.18 219.62,309.66M220.25,312.11 220.38,312.61 220.50,313.11 220.62,313.61 220.75,314.11 220.88,314.61 221.00,315.12 221.12,315.63 221.25,316.14 221.38,316.65 221.50,317.16 221.62,317.68 221.75,318.20 221.88,318.71 222.00,319.24 222.12,319.76 222.25,320.28 222.38,320.81 222.50,321.34 222.62,321.87 222.75,322.40 222.88,322.93 223.00,323.47 223.12,324.01 223.25,324.54 223.38,325.08 223.50,325.63 223.62,326.17M224.25,328.91 224.38,329.47 224.50,330.02 224.62,330.58 224.75,331.13 224.88,331.69 225.00,332.25 225.12,332.82 225.25,333.38 225.38,333.94 225.50,334.51 225.62,335.08 225.75,335.65 225.88,336.22 226.00,336.79 226.12,337.36 226.25,337.94 226.38,338.51 226.50,339.09 226.62,339.67 226.75,340.25 226.88,340.83 227.00,341.41 227.12,341.99 227.25,342.58 227.38,343.16 227.50,343.75 227.62,344.34M228.25,347.29 228.38,347.89 228.50,348.48 228.62,349.08 228.75,349.68 228.88,350.28 229.00,350.88 229.12,351.48 229.25,352.08 229.38,352.68 229.50,353.28 229.62,353.88 229.75,354.49 229.88,355.09 230.00,355.70 230.12,356.31 230.25,356.92 230.38,357.52 230.50,358.13 230.62,358.74 230.75,359.35 230.88,359.96 231.00,360.58 231.12,361.19 231.25,361.80 231.38,362.42 231.50,363.03 231.62,363.64M232.25,366.73 232.38,367.34 232.50,367.96 232.62,368.58 232.75,369.20 232.88,369.82 233.00,370.44 233.12,371.06 233.25,371.68 233.38,372.30 233.50,372.92 233.62,373.54 233.75,374.17 233.88,374.79 234.00,375.41 234.12,376.03 234.25,376.66 234.38,377.28 234.50,377.90 234.62,378.52 234.75,379.15 234.88,379.77 235.00,380.39 235.12,381.02 235.25,381.64 235.38,382.26 235.50,382.89 235.62,383.51M236.25,386.62 236.38,387.25 236.50,387.87 236.62,388.49 236.75,389.11 236.88,389.73 237.00,390.36 237.12,390.98 237.25,391.60 237.38,392.22 237.50,392.84 237.62,393.46 237.75,394.08 237.88,394.70 238.00,395.32 238.12,395.94 238.25,396.56 238.38,397.17 238.50,397.79 238.62,398.41 238.75,399.02 238.88,399.64 239.00,400.26 239.12,400.87 239.25,401.48 239.38,402.10 239.50,402.71 239.62,403.32M240.25,406.37 240.38,406.98 240.50,407.59 240.62,408.20 240.75,408.80 240.88,409.41 241.00,410.01 241.12,410.62 241.25,411.22 241.38,411.82 241.50,412.42 241.62,413.02 241.75,413.62 241.88,414.22 242.00,414.82 242.12,415.41 242.25,416.01 242.38,416.60 242.50,417.19 242.62,417.79 242.75,418.38 242.88,418.97 243.00,419.56 243.12,420.14 243.25,420.73 243.38,421.31 243.50,421.90 243.62,422.48M244.25,425.38 244.38,425.95 244.50,426.53 244.62,427.10 244.75,427.67 244.88,428.24 245.00,428.81 245.12,429.38 245.25,429.95 245.38,430.51 245.50,431.07 245.62,431.64 245.75,432.20 245.88,432.75 246.00,433.31 246.12,433.87 246.25,434.42 246.38,434.97 246.50,435.53 246.62,436.08 246.75,436.62 246.88,437.17 247.00,437.71 247.12,438.26 247.25,438.80 247.38,439.34 247.50,439.88 247.62,440.41M248.25,443.07 248.38,443.60 248.50,444.12 248.62,444.64 248.75,445.16 248.88,445.68 249.00,446.20 249.12,446.72 249.25,447.23 249.38,447.74 249.50,448.25 249.62,448.76 249.75,449.26 249.88,449.77 250.00,450.27 250.12,450.77 250.25,451.27 250.38,451.76 250.50,452.26 250.62,452.75 250.75,453.24 250.88,453.73 251.00,454.21 251.12,454.70 251.25,455.18 251.38,455.66 251.50,456.13 251.62,456.61M252.25,458.95 252.38,459.42 252.50,459.88 252.62,460.34 252.75,460.79 252.88,461.25 253.00,461.70 253.12,462.15 253.25,462.59 253.38,463.04 253.50,463.48 253.62,463.92" fill="none" stroke="#0000ff" stroke-width="1.05"/><text x="255.5" y="133" font-family="Liberation Mono" font-size="14.8" fill="#ff00ff" stroke="#ff00ff" stroke-width="0.6" letter-spacing="0.35">Y=f2(X)</text><text x="256" y="215.5" font-family="Liberation Sans" font-size="13" fill="#00ffff" stroke="#00ffff" stroke-width="0.5" letter-spacing="2.6">Y=f1(X)</text><text x="231" y="363.5" font-family="Liberation Mono" font-size="15.3" fill="#0000ff" stroke="#0000ff" stroke-width="0.7" letter-spacing="0.35">Y=f1(X)-f2(X)</text></svg>
<div class="sk2" style="left:4px;top:446px;width:112px;height:13px;"></div>
<div class="sk2" style="left:118px;top:446px;width:238px;height:13px;"></div>
<div class="win" style="left:360px;top:80px;width:280px;height:222px;"></div>
<div class="" style="left:362px;top:84px;width:275px;height:14px;background:#000080"></div>
<div class="t " style="left:363.5px;top:86px;font:bold 9px 'Liberation Sans';color:#fff">Function Memory</div>
<div class="rb" style="left:623px;top:86px;width:12px;height:11px;"></div>
<svg style="position:absolute;left:623px;top:86px" width="12" height="11" viewBox="0 0 12 11"><path d="M3.5 3L8.5 8M8.5 3L3.5 8" stroke="#000" stroke-width="1.4"/></svg>
<div class="t mn" style="left:368px;top:107px;font-size:9.5px">f2(X)=</div>
<div class="sk" style="left:394px;top:104px;width:176px;height:18px;background:#fff"></div>
<div class="t mono" style="left:397px;top:108.5px;">2X</div>
<div class="sk" style="left:366px;top:127px;width:204px;height:144px;background:#fff"></div>
<div class="" style="left:368px;top:129px;width:24px;height:12px;background:#c0c0c0;box-shadow:inset 1px 1px #fff,inset -1px -1px #808080"></div>
<div class="" style="left:392px;top:129px;width:176px;height:12px;background:#c0c0c0;box-shadow:inset 1px 1px #fff,inset -1px 0 #808080"></div>
<div class="" style="left:368px;top:140.5px;width:200px;height:1px;background:#000"></div>
<div class="t mono" style="left:369px;top:131.5px;font-size:8px">f(x)</div>
<div class="" style="left:368px;top:141.5px;width:24px;height:12.75px;background:#c0c0c0;box-shadow:inset 1px 1px #fff,inset -1px -1px #808080"></div>
<div class="" style="left:392px;top:153.25px;width:176px;height:1px;background:#c0c0c0"></div>
<div class="t mono" style="left:369.5px;top:145.2px;">f1</div>
<div class="t mono" style="left:394.5px;top:145.2px;color:#000">3sin X</div>
<div class="" style="left:368px;top:154.25px;width:24px;height:12.75px;background:#c0c0c0;box-shadow:inset 1px 1px #fff,inset -1px -1px #808080"></div>
<div class="" style="left:392px;top:154.25px;width:176px;height:12.25px;background:#000080"></div>
<div class="t mono" style="left:369.5px;top:157.95px;">f2</div>
<div class="t mono" style="left:394.5px;top:157.95px;color:#fff">2X</div>
<div class="" style="left:368px;top:167.0px;width:24px;height:12.75px;background:#c0c0c0;box-shadow:inset 1px 1px #fff,inset -1px -1px #808080"></div>
<div class="" style="left:392px;top:178.75px;width:176px;height:1px;background:#c0c0c0"></div>
<div class="t mono" style="left:369.5px;top:170.7px;">f3</div>
<div class="t mono" style="left:394.5px;top:170.7px;color:#000">X</div>
<div class="" style="left:368px;top:179.75px;width:24px;height:12.75px;background:#c0c0c0;box-shadow:inset 1px 1px #fff,inset -1px -1px #808080"></div>
<div class="" style="left:392px;top:191.5px;width:176px;height:1px;background:#c0c0c0"></div>
<div class="t mono" style="left:369.5px;top:183.45px;">f4</div>
<div class="t mono" style="left:394.5px;top:183.45px;color:#000">X</div>
<div class="" style="left:368px;top:192.5px;width:24px;height:12.75px;background:#c0c0c0;box-shadow:inset 1px 1px #fff,inset -1px -1px #808080"></div>
<div class="" style="left:392px;top:204.25px;width:176px;height:1px;background:#c0c0c0"></div>
<div class="t mono" style="left:369.5px;top:196.2px;">f5</div>
<div class="t mono" style="left:394.5px;top:196.2px;color:#000">X</div>
<div class="" style="left:368px;top:205.25px;width:24px;height:12.75px;background:#c0c0c0;box-shadow:inset 1px 1px #fff,inset -1px -1px #808080"></div>
<div class="" style="left:392px;top:217.0px;width:176px;height:1px;background:#c0c0c0"></div>
<div class="t mono" style="left:369.5px;top:208.95px;">f6</div>
<div class="t mono" style="left:394.5px;top:208.95px;color:#000">X</div>
<div class="" style="left:368px;top:218.0px;width:24px;height:12.75px;background:#c0c0c0;box-shadow:inset 1px 1px #fff,inset -1px -1px #808080"></div>
<div class="" style="left:392px;top:229.75px;width:176px;height:1px;background:#c0c0c0"></div>
<div class="t mono" style="left:369.5px;top:221.7px;">f7</div>
<div class="t mono" style="left:394.5px;top:221.7px;color:#000">X</div>
<div class="" style="left:368px;top:230.75px;width:24px;height:12.75px;background:#c0c0c0;box-shadow:inset 1px 1px #fff,inset -1px -1px #808080"></div>
<div class="" style="left:392px;top:242.5px;width:176px;height:1px;background:#c0c0c0"></div>
<div class="t mono" style="left:369.5px;top:234.45px;">f8</div>
<div class="t mono" style="left:394.5px;top:234.45px;color:#000">X</div>
<div class="" style="left:368px;top:243.5px;width:24px;height:12.75px;background:#c0c0c0;box-shadow:inset 1px 1px #fff,inset -1px -1px #808080"></div>
<div class="" style="left:392px;top:255.25px;width:176px;height:1px;background:#c0c0c0"></div>
<div class="t mono" style="left:369.5px;top:247.2px;">f9</div>
<div class="t mono" style="left:394.5px;top:247.2px;color:#000">X</div>
<div class="" style="left:368px;top:256.25px;width:24px;height:12.75px;background:#c0c0c0;box-shadow:inset 1px 1px #fff,inset -1px -1px #808080"></div>
<div class="" style="left:392px;top:268.0px;width:176px;height:1px;background:#c0c0c0"></div>
<div class="t mono" style="left:369.5px;top:259.95px;">f10</div>
<div class="t mono" style="left:394.5px;top:259.95px;color:#000">X</div>
<div class="" style="left:367px;top:128px;width:1px;height:142px;background:#000"></div>
<div class="" style="left:367px;top:128px;width:202px;height:1px;background:#000"></div>
<div class="rb" style="left:574px;top:103px;width:60px;height:20px;"></div>
<div class="t mn" style="left:574px;top:106.5px;width:60px;text-align:center;font-size:9.3px;font-weight:bold">Edit</div>
<div class="rb" style="left:574px;top:123px;width:60px;height:19px;"></div>
<div class="t mn" style="left:574px;top:127.5px;width:60px;text-align:center;font-size:9.3px;color:#808080;text-shadow:1px 1px #fff">Cut</div>
<div class="rb" style="left:574px;top:143px;width:60px;height:19px;"></div>
<div class="t mn" style="left:574px;top:147.5px;width:60px;text-align:center;font-size:9.3px;color:#808080;text-shadow:1px 1px #fff">Paste</div>
<div class="rb" style="left:574px;top:181px;width:60px;height:20px;"></div>
<div class="t mn" style="left:574px;top:185.5px;width:60px;text-align:center;font-size:9.3px;">Select All</div>
<div class="rb" style="left:574px;top:219px;width:60px;height:20px;"></div>
<svg style="position:absolute;left:584px;top:220px" width="20" height="18" viewBox="0 0 20 18"><path d="M3 8c0-4 3-5 6-5" fill="none" stroke="#080" stroke-width="2"/><path d="M8 1l3 2-3 2z" fill="#080"/><path d="M2 11h6v6h-6z" fill="#000"/><path d="M3 11.5h4v2.5h-4z" fill="#fff"/><text x="10" y="10" font-family="Liberation Serif" font-size="9.5" font-weight="bold" letter-spacing="-0.5">fx</text></svg>
<div class="t mn" style="left:604px;top:222.5px;font-size:9.3px">Load</div>
<div class="rb" style="left:574px;top:239px;width:60px;height:20px;"></div>
<svg style="position:absolute;left:582px;top:240px" width="22" height="18" viewBox="0 0 22 18"><text x="1" y="9" font-family="Liberation Serif" font-size="9.5" font-weight="bold" letter-spacing="-0.5">fx</text><path d="M10 4h5v6" fill="none" stroke="#080" stroke-width="1.5"/><path d="M13 9l2 3 2-3z" fill="#080"/><path d="M11 12h7v6h-7z" fill="#000"/><path d="M12 12h5v2h-5z" fill="#fff"/><path d="M12 13h5" stroke="#00f"/><path d="M12 12.3h5" stroke="#f00" stroke-width="0.6"/></svg>
<div class="t mn" style="left:605px;top:242.5px;font-size:9.3px">Save</div>
<div class="rbd" style="left:382px;top:276px;width:60px;height:20px;"></div>
<div class="" style="left:385px;top:279px;width:54px;height:14px;border:1px dotted #000"></div>
<svg style="position:absolute;left:394px;top:278px" width="20" height="16" viewBox="0 0 20 16"><path d="M2 8l4 5 10-10" fill="none" stroke="#00a" stroke-width="3"/><path d="M2 7.5l4 4.5 10-10" fill="none" stroke="#0c0" stroke-width="2.2"/></svg>
<div class="t mn" style="left:416px;top:279px;font-size:9.3px">OK</div>
<div class="rb" style="left:446px;top:276px;width:60px;height:20px;"></div>
<div class="t mn" style="left:446px;top:279.5px;width:60px;text-align:center;font-size:9.3px;">Cancel</div>
<div class="rb" style="left:510px;top:276px;width:60px;height:20px;"></div>
<div class="t mn" style="left:510px;top:279.5px;width:60px;text-align:center;font-size:9.3px;">Help</div>
<div class="win" style="left:360px;top:308px;width:280px;height:135px;"></div>
<div class="" style="left:363px;top:312px;width:272px;height:12px;background:#808080"></div>
<div class="t " style="left:364px;top:313px;font:bold 9.5px 'Liberation Sans';color:#f00">S</div>
<div class="t " style="left:370px;top:313px;font:bold 9.5px 'Liberation Sans';color:#000">G</div>
<div class="t " style="left:369.5px;top:313px;font:bold 9.5px 'Liberation Sans';color:#f00;clip-path:inset(0 50% 0 0)">G</div>
<div class="t " style="left:379px;top:313.5px;font:9px 'Liberation Sans';color:#c0c0c0;letter-spacing:0.4px">Display Screen</div>
<div class="rb" style="left:596px;top:313px;width:12px;height:10px;"></div>
<div class="rb" style="left:608px;top:313px;width:12px;height:10px;"></div>
<div class="rb" style="left:622.5px;top:313px;width:12px;height:10px;"></div>
<div class="" style="left:599px;top:319px;width:5px;height:2px;background:#000"></div>
<div class="" style="left:611px;top:315px;width:7px;height:6px;border:1px solid #000;border-top-width:2px"></div>
<svg style="position:absolute;left:622.5px;top:313px" width="12" height="10" viewBox="0 0 12 10"><path d="M3.5 2.5L8.5 7.5M8.5 2.5L3.5 7.5" stroke="#000" stroke-width="1.4"/></svg>
<div class="sk" style="left:363px;top:326px;width:274px;height:116px;background:#fff"></div>
<div class="t mono" style="left:366.5px;top:330.3px;font-size:9.15px">graph Y=f1(X+3)-f2(X)  is done.</div>
<div class="t mono" style="left:366.5px;top:342.5px;font-size:9.15px">graph Y=f1(X)  is done.</div>
<div class="t mono" style="left:366.5px;top:354.7px;font-size:9.15px">graph Y=f2(X)  is done.</div>
<div class="t mono" style="left:366.5px;top:366.9px;font-size:9.15px">graph Y=f1(X)-f2(X)  is done.</div>
<div class="t mono" style="left:366.5px;top:379.1px;font-size:9.15px">graph Y=f1(X)+f2(X)  is done.</div>
<div class="t mono" style="left:366.5px;top:391.3px;font-size:9.15px">graph Y=f1(X)  is done.</div>
<div class="t mono" style="left:366.5px;top:403.5px;font-size:9.15px">graph Y=f2(X)  is done.</div>
<div class="t mono" style="left:366.5px;top:415.7px;font-size:9.15px">graph Y=f1(X)-f2(X)  is done.</div>
<div class="pb" style="left:623px;top:328px;width:13px;height:110px;box-shadow:none"></div>
<div class="rb" style="left:623px;top:328px;width:13px;height:12px;"></div>
<svg style="position:absolute;left:623px;top:328px" width="13" height="12" viewBox="0 0 13 12"><path d="M3 8h7l-3.5-3.5z" fill="#000"/></svg>
<div class="rb" style="left:623px;top:404px;width:13px;height:21px;"></div>
<div class="rb" style="left:623px;top:425px;width:13px;height:13px;"></div>
<svg style="position:absolute;left:623px;top:425px" width="13" height="13" viewBox="0 0 13 13"><path d="M3 5h7l-3.5 3.5z" fill="#000"/></svg>
<div class="" style="left:0px;top:461px;width:360px;height:1px;background:#000"></div>
<div class="" style="left:0px;top:462px;width:640px;height:18px;background:#c0c0c0"></div>
<div class="" style="left:0px;top:475px;width:640px;height:1px;background:#fff"></div>
<div class="" style="left:0px;top:478px;width:640px;height:1px;background:#555"></div>
<div class="" style="left:0px;top:479px;width:640px;height:1px;background:#000"></div>
<div class="" style="left:0px;top:462px;width:1px;height:13px;background:#808080"></div>
<div class="" style="left:0px;top:462px;width:640px;height:1px;background:#808080"></div>
<div class="t mn" style="left:2px;top:463.5px;font-size:8.5px">View the Function Memory.</div>
</div>
</body></html>
